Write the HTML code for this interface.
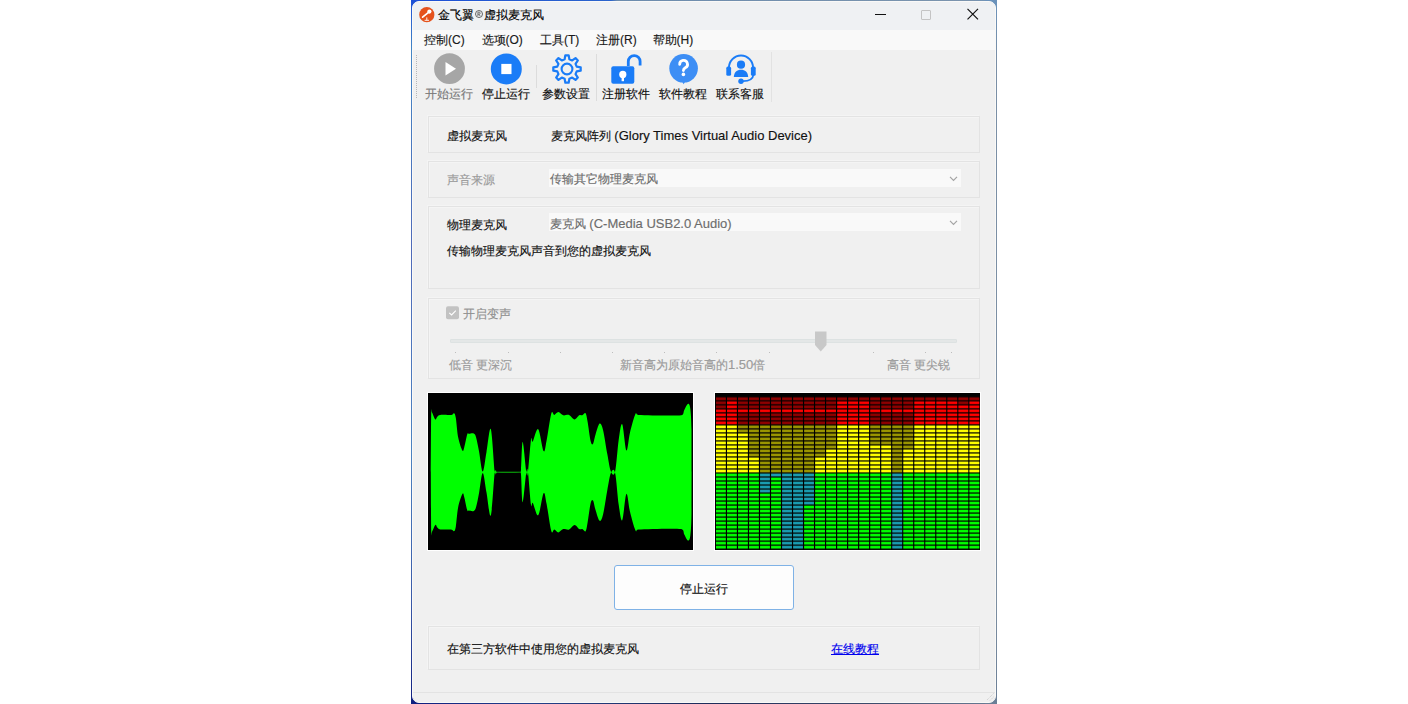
<!DOCTYPE html>
<html><head><meta charset="utf-8"><style>
html,body{margin:0;padding:0;background:#fff;width:1408px;height:704px;overflow:hidden;position:relative}
*{box-sizing:border-box}
.t{position:absolute;white-space:nowrap;font-size:12px;line-height:20px;font-family:'Liberation Sans',sans-serif;-webkit-text-stroke:0.15px currentColor}
.box{position:absolute;border:1px solid #e3e3e3;box-shadow:-1px -1px 0 #f4f4f4, inset 1px 1px 0 #f4f4f4}
</style></head><body>
<div style="position:absolute;left:411px;top:0;width:586px;height:704px;background:#f0f0f0"></div>
<div style="position:absolute;left:411px;top:0;width:586px;height:12px;background:linear-gradient(90deg,#1d50d6 0,#2a64cc 200px,#6c8cae 206px,#7b94ad 560px,#6a92bb 586px)"></div>
<div style="position:absolute;left:411px;top:692px;width:586px;height:12px;background:linear-gradient(90deg,#101f80 0,#23408a 120px,#1e2c5a 300px,#3c4c6c 460px,#6a7e96 586px)"></div>
<div style="position:absolute;left:411px;top:0;width:12px;height:704px;background:linear-gradient(180deg,#1d50d6 0,#4586c4 50px,#4f6ab8 250px,#4c82c0 450px,#3a5aa8 600px,#101f80 704px)"></div>
<div style="position:absolute;left:985px;top:0;width:12px;height:704px;background:linear-gradient(180deg,#6a92bb 0,#7a8fa6 60px,#7d8fa2 600px,#6a7e96 704px)"></div>
<div style="position:absolute;left:412px;top:1px;width:584px;height:702px;border-radius:7px;background:#f0f0f0;border:1px solid #faf9f7;overflow:hidden">
  <div style="position:absolute;left:0;top:0;width:100%;height:28px;background:#eff1f3"></div>
  <div style="position:absolute;left:0;top:28px;width:100%;height:20px;background:#f9f9f9"></div>
</div>
<svg width="16" height="16" style="position:absolute;left:419px;top:7px"><circle cx="7.8" cy="7.7" r="7.6" fill="#e5521c"/><path d="M3.6 10.2 L9.2 5.6" stroke="#fff" stroke-width="1.7" stroke-linecap="round"/><circle cx="10.4" cy="4.6" r="2.1" fill="#fff"/><path d="M7.8 10.4 V13.3 M5.6 13.3 H10" stroke="#fff" stroke-width="0.9"/></svg>
<div class="t" style="left:438px;top:4.800000000000001px;color:#000;">金飞翼</div>
<svg width="9" height="9" style="position:absolute;left:475px;top:10px"><circle cx="4.0" cy="4.0" r="3.5" fill="none" stroke="#555" stroke-width="0.9"/><path d="M2.9 6.0 V2.2 H4.2 A1.0 1.0 0 0 1 4.2 4.2 H2.9 M4.0 4.2 L5.1 6.0" fill="none" stroke="#555" stroke-width="0.8"/></svg>
<div class="t" style="left:483.6px;top:4.800000000000001px;color:#000;">虚拟麦克风</div>
<div style="position:absolute;left:875px;top:14px;width:11px;height:1px;background:#111"></div>
<div style="position:absolute;left:921px;top:10px;width:10px;height:10px;border:1px solid #c4c4c4;border-radius:1px"></div>
<svg width="14" height="14" style="position:absolute;left:966px;top:7.3px"><path d="M1.5 1.8 L12 12.3 M12 1.8 L1.5 12.3" stroke="#111" stroke-width="1.2"/></svg>
<div class="t" style="left:424px;top:29.5px;color:#1a1a1a;">控制(C)</div>
<div class="t" style="left:481.5px;top:29.5px;color:#1a1a1a;">选项(O)</div>
<div class="t" style="left:540px;top:29.5px;color:#1a1a1a;">工具(T)</div>
<div class="t" style="left:596px;top:29.5px;color:#1a1a1a;">注册(R)</div>
<div class="t" style="left:652.6px;top:29.5px;color:#1a1a1a;">帮助(H)</div>
<div style="position:absolute;left:416px;top:55px;width:1px;height:43px;border-left:1px dotted #b8b8b8"></div>
<svg width="32" height="32" style="position:absolute;left:434px;top:53px"><circle cx="15.5" cy="15.7" r="15.4" fill="#a6a6a6"/><path d="M11.5 9 L22 15.7 L11.5 22.4 Z" fill="#fff"/></svg>
<svg width="32" height="32" style="position:absolute;left:490px;top:53px"><circle cx="16.3" cy="15.9" r="15.5" fill="#1a7cf7"/><rect x="11.3" y="10.9" width="10.2" height="10.2" fill="#fff"/></svg>
<div style="position:absolute;left:536px;top:65px;width:1px;height:23px;background:#dcdcdc"></div>
<svg width="32" height="32" style="position:absolute;left:550.8px;top:52.9px"><path d="M13.62 6.29 L14.35 2.30 L17.65 2.30 L18.38 6.29 L21.19 7.45 L24.52 5.14 L26.86 7.48 L24.55 10.81 L25.71 13.62 L29.70 14.35 L29.70 17.65 L25.71 18.38 L24.55 21.19 L26.86 24.52 L24.52 26.86 L21.19 24.55 L18.38 25.71 L17.65 29.70 L14.35 29.70 L13.62 25.71 L10.81 24.55 L7.48 26.86 L5.14 24.52 L7.45 21.19 L6.29 18.38 L2.30 17.65 L2.30 14.35 L6.29 13.62 L7.45 10.81 L5.14 7.48 L7.48 5.14 L10.81 7.45 Z" fill="none" stroke="#1a7cf7" stroke-width="2.2" stroke-linejoin="round"/><circle cx="16" cy="16" r="5.4" fill="none" stroke="#1a7cf7" stroke-width="2.1"/></svg>
<div style="position:absolute;left:596px;top:54px;width:1px;height:47px;background:#dcdcdc"></div>
<svg width="34" height="34" style="position:absolute;left:608px;top:51px"><path d="M20.3 15 V10.5 A5.9 5.9 0 0 1 32.1 10.5 V14.5" fill="none" stroke="#1a7cf7" stroke-width="2.8"/><rect x="3.3" y="15.3" width="23" height="17.5" rx="2" fill="#1a7cf7"/><circle cx="14.8" cy="23.4" r="3.6" fill="#fff"/><rect x="13.6" y="24" width="2.4" height="6.2" fill="#fff"/></svg>
<svg width="32" height="34" style="position:absolute;left:668px;top:52px"><circle cx="15.6" cy="16.3" r="14.3" fill="#3d8ef5"/><path d="M14.3 30 L15.6 32.3 L17 30 Z" fill="#3d8ef5"/><path d="M11.7 12.4 A3.9 3.9 0 1 1 17.3 15.8 C15.9 16.7 15.4 17.3 15.4 18.6" fill="none" stroke="#fff" stroke-width="2.8" stroke-linecap="round"/><circle cx="15.4" cy="22.4" r="1.8" fill="#fff"/></svg>
<svg width="34" height="34" style="position:absolute;left:723.5px;top:51px"><path d="M4.9 17 A12.1 12.6 0 0 1 29.1 17" fill="none" stroke="#1a7cf7" stroke-width="2"/><rect x="2.3" y="15.6" width="4.8" height="9.2" rx="1.6" fill="#1a7cf7"/><rect x="26.9" y="15.6" width="4.8" height="9.2" rx="1.6" fill="#1a7cf7"/><circle cx="17" cy="13.7" r="4.1" fill="#1a7cf7"/><path d="M9.8 26 C10.1 21.2 13 18.8 17 18.8 C21 18.8 23.9 21.2 24.2 26 Z" fill="#1a7cf7"/><path d="M29.3 24 C29 28.4 25.5 30 19 30.2" fill="none" stroke="#1a7cf7" stroke-width="1.8"/><circle cx="17" cy="30.2" r="2.7" fill="#1a7cf7"/></svg>
<div style="position:absolute;left:771px;top:52px;width:1px;height:50px;background:#e2e2e2"></div>
<div class="t" style="left:425px;top:84px;color:#7a7a7a;">开始运行</div>
<div class="t" style="left:482.2px;top:84px;color:#111;">停止运行</div>
<div class="t" style="left:542.3px;top:84px;color:#111;">参数设置</div>
<div class="t" style="left:602px;top:84px;color:#111;">注册软件</div>
<div class="t" style="left:659px;top:84px;color:#111;">软件教程</div>
<div class="t" style="left:716.2px;top:84px;color:#111;">联系客服</div>
<div class="box" style="left:428px;top:116px;width:552px;height:37px"></div>
<div class="box" style="left:428px;top:161px;width:552px;height:37px"></div>
<div class="box" style="left:428px;top:206px;width:552px;height:83px"></div>
<div class="box" style="left:428px;top:298px;width:552px;height:81px"></div>
<div class="box" style="left:428px;top:626px;width:552px;height:44px"></div>
<div class="t" style="left:447px;top:126px;color:#111;">虚拟麦克风</div>
<div class="t" style="left:551px;top:126px;color:#111;">麦克风阵列 <span style="font-size:13px;letter-spacing:0">(Glory Times Virtual Audio Device)</span></div>
<div class="t" style="left:447px;top:170.4px;color:#9a9a9a;">声音来源</div>
<div style="position:absolute;left:549px;top:169px;width:412px;height:18px;background:#f9f9f9"></div>
<svg width="10" height="7" style="position:absolute;left:949px;top:176px"><path d="M1 0.8 L4.5 4.3 L8 0.8" fill="none" stroke="#a4a4a4" stroke-width="1.2"/></svg>
<div style="position:absolute;left:549px;top:213px;width:412px;height:18px;background:#f9f9f9"></div>
<svg width="10" height="7" style="position:absolute;left:949px;top:220px"><path d="M1 0.8 L4.5 4.3 L8 0.8" fill="none" stroke="#a4a4a4" stroke-width="1.2"/></svg>
<div class="t" style="left:550px;top:169.4px;color:#6d6d6d;">传输其它物理麦克风</div>
<div class="t" style="left:447px;top:214.8px;color:#111;">物理麦克风</div>
<div class="t" style="left:550px;top:213.5px;color:#6d6d6d;">麦克风 <span style="font-size:13px;letter-spacing:0">(C-Media USB2.0 Audio)</span></div>
<div class="t" style="left:447px;top:241.2px;color:#111;">传输物理麦克风声音到您的虚拟麦克风</div>
<svg width="14" height="14" style="position:absolute;left:446px;top:306px"><rect x="0" y="0.3" width="13" height="13" rx="2" fill="#c2c2c2"/><path d="M3.3 6.8 L5.6 9 L9.8 4.6" fill="none" stroke="#fff" stroke-width="1.1"/></svg>
<div class="t" style="left:463px;top:304px;color:#8f8f8f;">开启变声</div>
<div style="position:absolute;left:450px;top:338.5px;width:507px;height:4.5px;background:#e4e7e7;border:1px solid #dde2e2;border-radius:1px"></div>
<div style="position:absolute;left:455.3px;top:351.5px;width:1px;height:1px;background:#bdbdbd"></div>
<div style="position:absolute;left:507.5px;top:351.5px;width:1px;height:1px;background:#bdbdbd"></div>
<div style="position:absolute;left:559.7px;top:351.5px;width:1px;height:1px;background:#bdbdbd"></div>
<div style="position:absolute;left:611.9px;top:351.5px;width:1px;height:1px;background:#bdbdbd"></div>
<div style="position:absolute;left:664.1px;top:351.5px;width:1px;height:1px;background:#bdbdbd"></div>
<div style="position:absolute;left:716.3px;top:351.5px;width:1px;height:1px;background:#bdbdbd"></div>
<div style="position:absolute;left:768.5px;top:351.5px;width:1px;height:1px;background:#bdbdbd"></div>
<div style="position:absolute;left:872.9px;top:351.5px;width:1px;height:1px;background:#bdbdbd"></div>
<div style="position:absolute;left:925.1px;top:351.5px;width:1px;height:1px;background:#bdbdbd"></div>
<div style="position:absolute;left:950.9px;top:351.5px;width:1px;height:1px;background:#bdbdbd"></div>
<svg width="14" height="22" style="position:absolute;left:814px;top:331px"><path d="M1 0.5 H12.5 V14 L6.75 20.5 L1 14 Z" fill="#c8c8c8"/></svg>
<div class="t" style="left:449px;top:355px;color:#9a9a9a;">低音 更深沉</div>
<div class="t" style="left:620px;top:355px;color:#9a9a9a;">新音高为原始音高的<span style="font-size:13px;letter-spacing:0">1.50</span>倍</div>
<div class="t" style="left:887px;top:355px;color:#9a9a9a;">高音 更尖锐</div>
<div style="position:absolute;left:427px;top:392px;width:267px;height:159px;background:#fff"></div>
<div style="position:absolute;left:714px;top:392px;width:267px;height:159px;background:#fff"></div>
<svg width="265" height="157" style="position:absolute;left:428px;top:393px;background:#000"><path d="M2.80 79.20 C2.87 69.50 3.00 30.95 3.20 21.00 C3.40 11.05 3.32 18.60 4.00 19.50 C4.68 20.40 6.42 25.68 7.30 26.40 C8.18 27.12 8.47 24.55 9.30 23.80 C10.13 23.05 10.00 22.22 12.30 21.90 C14.60 21.58 20.82 22.18 23.10 21.90 C25.38 21.62 25.22 19.73 26.00 20.20 C26.78 20.67 27.10 20.67 27.80 24.70 C28.50 28.73 29.10 38.93 30.20 44.40 C31.30 49.87 33.40 55.82 34.40 57.50 C35.40 59.18 35.40 57.18 36.20 54.50 C37.00 51.82 38.40 43.68 39.20 41.40 C40.00 39.12 39.92 40.95 41.00 40.80 C42.08 40.65 44.52 39.90 45.70 40.50 C46.88 41.10 47.20 41.37 48.10 44.40 C49.00 47.43 50.00 53.02 51.10 58.70 C52.20 64.38 53.47 78.45 54.70 78.50 C55.93 78.55 57.15 66.08 58.50 59.00 C59.85 51.92 61.45 32.87 62.80 36.00 C64.15 39.13 65.77 71.00 66.60 77.80 C67.43 84.60 67.37 76.57 67.80 76.80 C68.23 77.03 67.80 78.80 69.20 79.20 C73.20 79.60 87.83 79.60 91.80 79.20 C93.00 78.80 92.52 81.82 93.00 76.80 C93.48 71.78 93.82 48.77 94.70 49.10 C95.58 49.43 97.42 73.85 98.30 78.80 C99.18 83.75 99.22 84.15 100.00 78.80 C100.78 73.45 102.20 51.75 103.00 46.70 C103.80 41.65 103.60 50.25 104.80 48.50 C106.00 46.75 108.40 34.60 110.20 36.20 C112.00 37.80 114.22 56.13 115.60 58.10 C116.98 60.07 117.22 54.27 118.50 48.00 C119.78 41.73 122.00 24.85 123.30 20.50 C124.60 16.15 125.12 22.15 126.30 21.90 C127.48 21.65 128.92 18.93 130.40 19.00 C131.88 19.07 133.42 21.82 135.20 22.30 C136.98 22.78 139.22 21.22 141.10 21.90 C142.98 22.58 144.80 26.33 146.50 26.40 C148.20 26.47 150.00 22.98 151.30 22.30 C152.60 21.62 153.25 22.65 154.30 22.30 C155.35 21.95 156.72 19.12 157.60 20.20 C158.48 21.28 158.77 24.18 159.60 28.80 C160.43 33.42 161.70 44.22 162.60 47.90 C163.50 51.58 164.20 51.88 165.00 50.90 C165.80 49.92 166.30 45.38 167.40 42.00 C168.50 38.62 170.32 31.40 171.60 30.60 C172.88 29.80 173.82 32.12 175.10 37.20 C176.38 42.28 178.00 54.22 179.30 61.10 C180.60 67.98 181.60 75.60 182.90 78.50 C184.20 81.40 185.80 83.80 187.10 78.50 C188.40 73.20 189.52 54.58 190.70 46.70 C191.88 38.82 192.92 29.40 194.20 31.20 C195.48 33.00 197.10 56.10 198.40 57.50 C199.70 58.90 200.50 45.67 202.00 39.60 C203.50 33.53 206.00 24.05 207.40 21.10 C208.80 18.15 207.40 21.70 210.40 21.90 C218.05 22.10 245.65 23.13 253.30 22.30 C256.30 21.47 255.20 18.80 256.30 16.90 C257.40 15.00 258.90 11.10 259.90 10.90 C260.90 10.70 261.70 11.35 262.30 15.70 C262.90 20.05 263.28 26.42 263.50 37.00 C263.60 47.58 263.58 72.17 263.60 79.20 C263.58 86.23 263.60 110.82 263.50 121.40 C263.28 131.98 262.90 138.35 262.30 142.70 C261.70 147.05 260.90 147.70 259.90 147.50 C258.90 147.30 257.40 143.40 256.30 141.50 C255.20 139.60 256.30 136.93 253.30 136.10 C245.65 135.27 218.05 136.30 210.40 136.50 C207.40 136.70 208.80 140.25 207.40 137.30 C206.00 134.35 203.50 124.87 202.00 118.80 C200.50 112.73 199.70 99.50 198.40 100.90 C197.10 102.30 195.48 125.40 194.20 127.20 C192.92 129.00 191.88 119.58 190.70 111.70 C189.52 103.82 188.40 85.20 187.10 79.90 C185.80 74.60 184.20 77.00 182.90 79.90 C181.60 82.80 180.60 90.42 179.30 97.30 C178.00 104.18 176.38 116.12 175.10 121.20 C173.82 126.28 172.88 128.60 171.60 127.80 C170.32 127.00 168.50 119.78 167.40 116.40 C166.30 113.02 165.80 108.48 165.00 107.50 C164.20 106.52 163.50 106.82 162.60 110.50 C161.70 114.18 160.43 124.98 159.60 129.60 C158.77 134.22 158.48 137.12 157.60 138.20 C156.72 139.28 155.35 136.45 154.30 136.10 C153.25 135.75 152.60 136.78 151.30 136.10 C150.00 135.42 148.20 131.93 146.50 132.00 C144.80 132.07 142.98 135.82 141.10 136.50 C139.22 137.18 136.98 135.62 135.20 136.10 C133.42 136.58 131.88 139.33 130.40 139.40 C128.92 139.47 127.48 136.75 126.30 136.50 C125.12 136.25 124.60 142.25 123.30 137.90 C122.00 133.55 119.78 116.67 118.50 110.40 C117.22 104.13 116.98 98.33 115.60 100.30 C114.22 102.27 112.00 120.60 110.20 122.20 C108.40 123.80 106.00 111.65 104.80 109.90 C103.60 108.15 103.80 116.75 103.00 111.70 C102.20 106.65 100.78 84.95 100.00 79.60 C99.22 74.25 99.18 74.65 98.30 79.60 C97.42 84.55 95.58 108.97 94.70 109.30 C93.82 109.63 93.48 86.62 93.00 81.60 C92.52 76.58 93.00 79.60 91.80 79.20 C87.83 78.80 73.20 78.80 69.20 79.20 C67.80 79.60 68.23 81.37 67.80 81.60 C67.37 81.83 67.43 73.80 66.60 80.60 C65.77 87.40 64.15 119.27 62.80 122.40 C61.45 125.53 59.85 106.48 58.50 99.40 C57.15 92.32 55.93 79.85 54.70 79.90 C53.47 79.95 52.20 94.02 51.10 99.70 C50.00 105.38 49.00 110.97 48.10 114.00 C47.20 117.03 46.88 117.30 45.70 117.90 C44.52 118.50 42.08 117.75 41.00 117.60 C39.92 117.45 40.00 119.28 39.20 117.00 C38.40 114.72 37.00 106.58 36.20 103.90 C35.40 101.22 35.40 99.22 34.40 100.90 C33.40 102.58 31.30 108.53 30.20 114.00 C29.10 119.47 28.50 129.67 27.80 133.70 C27.10 137.73 26.78 137.73 26.00 138.20 C25.22 138.67 25.38 136.78 23.10 136.50 C20.82 136.22 14.60 136.82 12.30 136.50 C10.00 136.18 10.13 135.35 9.30 134.60 C8.47 133.85 8.18 131.28 7.30 132.00 C6.42 132.72 4.68 138.00 4.00 138.90 C3.32 139.80 3.40 147.35 3.20 137.40 C3.00 127.45 2.87 88.90 2.80 79.20 Z" fill="#00ff00"/><line x1="69" y1="79.2" x2="93" y2="79.2" stroke="#0b8f0b" stroke-width="1.1"/></svg>
<svg width="265" height="157" style="position:absolute;left:715px;top:393px;background:#000"><rect x="1.00" y="3.80" width="9.8" height="4.0" fill="#380000"/><rect x="1.00" y="4.70" width="9.8" height="2.2" fill="#8e0000"/><rect x="1.00" y="7.81" width="9.8" height="4.0" fill="#380000"/><rect x="1.00" y="8.71" width="9.8" height="2.2" fill="#8e0000"/><rect x="1.00" y="11.82" width="9.8" height="4.0" fill="#380000"/><rect x="1.00" y="12.72" width="9.8" height="2.2" fill="#8e0000"/><rect x="1.00" y="15.83" width="9.8" height="4.0" fill="#5a0000"/><rect x="1.00" y="16.73" width="9.8" height="2.2" fill="#ff0000"/><rect x="1.00" y="19.84" width="9.8" height="4.0" fill="#5a0000"/><rect x="1.00" y="20.74" width="9.8" height="2.2" fill="#ff0000"/><rect x="1.00" y="23.85" width="9.8" height="4.0" fill="#5a0000"/><rect x="1.00" y="24.75" width="9.8" height="2.2" fill="#ff0000"/><rect x="1.00" y="27.86" width="9.8" height="4.0" fill="#5a0000"/><rect x="1.00" y="28.76" width="9.8" height="2.2" fill="#ff0000"/><rect x="1.00" y="31.87" width="9.8" height="4.0" fill="#5a5a00"/><rect x="1.00" y="32.77" width="9.8" height="2.2" fill="#ffff00"/><rect x="1.00" y="35.88" width="9.8" height="4.0" fill="#5a5a00"/><rect x="1.00" y="36.78" width="9.8" height="2.2" fill="#ffff00"/><rect x="1.00" y="39.89" width="9.8" height="4.0" fill="#5a5a00"/><rect x="1.00" y="40.79" width="9.8" height="2.2" fill="#ffff00"/><rect x="1.00" y="43.90" width="9.8" height="4.0" fill="#5a5a00"/><rect x="1.00" y="44.80" width="9.8" height="2.2" fill="#ffff00"/><rect x="1.00" y="47.91" width="9.8" height="4.0" fill="#5a5a00"/><rect x="1.00" y="48.81" width="9.8" height="2.2" fill="#ffff00"/><rect x="1.00" y="51.92" width="9.8" height="4.0" fill="#5a5a00"/><rect x="1.00" y="52.82" width="9.8" height="2.2" fill="#ffff00"/><rect x="1.00" y="55.93" width="9.8" height="4.0" fill="#5a5a00"/><rect x="1.00" y="56.83" width="9.8" height="2.2" fill="#ffff00"/><rect x="1.00" y="59.94" width="9.8" height="4.0" fill="#5a5a00"/><rect x="1.00" y="60.84" width="9.8" height="2.2" fill="#ffff00"/><rect x="1.00" y="63.95" width="9.8" height="4.0" fill="#5a5a00"/><rect x="1.00" y="64.85" width="9.8" height="2.2" fill="#ffff00"/><rect x="1.00" y="67.96" width="9.8" height="4.0" fill="#5a5a00"/><rect x="1.00" y="68.86" width="9.8" height="2.2" fill="#ffff00"/><rect x="1.00" y="71.97" width="9.8" height="4.0" fill="#5a5a00"/><rect x="1.00" y="72.87" width="9.8" height="2.2" fill="#ffff00"/><rect x="1.00" y="75.98" width="9.8" height="4.0" fill="#5a5a00"/><rect x="1.00" y="76.88" width="9.8" height="2.2" fill="#ffff00"/><rect x="1.00" y="79.99" width="9.8" height="4.0" fill="#005a00"/><rect x="1.00" y="80.89" width="9.8" height="2.2" fill="#00ff00"/><rect x="1.00" y="84.00" width="9.8" height="4.0" fill="#005a00"/><rect x="1.00" y="84.90" width="9.8" height="2.2" fill="#00ff00"/><rect x="1.00" y="88.01" width="9.8" height="4.0" fill="#005a00"/><rect x="1.00" y="88.91" width="9.8" height="2.2" fill="#00ff00"/><rect x="1.00" y="92.02" width="9.8" height="4.0" fill="#005a00"/><rect x="1.00" y="92.92" width="9.8" height="2.2" fill="#00ff00"/><rect x="1.00" y="96.03" width="9.8" height="4.0" fill="#005a00"/><rect x="1.00" y="96.93" width="9.8" height="2.2" fill="#00ff00"/><rect x="1.00" y="100.04" width="9.8" height="4.0" fill="#005a00"/><rect x="1.00" y="100.94" width="9.8" height="2.2" fill="#00ff00"/><rect x="1.00" y="104.05" width="9.8" height="4.0" fill="#005a00"/><rect x="1.00" y="104.95" width="9.8" height="2.2" fill="#00ff00"/><rect x="1.00" y="108.06" width="9.8" height="4.0" fill="#005a00"/><rect x="1.00" y="108.96" width="9.8" height="2.2" fill="#00ff00"/><rect x="1.00" y="112.07" width="9.8" height="4.0" fill="#005a00"/><rect x="1.00" y="112.97" width="9.8" height="2.2" fill="#00ff00"/><rect x="1.00" y="116.08" width="9.8" height="4.0" fill="#005a00"/><rect x="1.00" y="116.98" width="9.8" height="2.2" fill="#00ff00"/><rect x="1.00" y="120.09" width="9.8" height="4.0" fill="#005a00"/><rect x="1.00" y="120.99" width="9.8" height="2.2" fill="#00ff00"/><rect x="1.00" y="124.10" width="9.8" height="4.0" fill="#005a00"/><rect x="1.00" y="125.00" width="9.8" height="2.2" fill="#00ff00"/><rect x="1.00" y="128.11" width="9.8" height="4.0" fill="#005a00"/><rect x="1.00" y="129.01" width="9.8" height="2.2" fill="#00ff00"/><rect x="1.00" y="132.12" width="9.8" height="4.0" fill="#005a00"/><rect x="1.00" y="133.02" width="9.8" height="2.2" fill="#00ff00"/><rect x="1.00" y="136.13" width="9.8" height="4.0" fill="#005a00"/><rect x="1.00" y="137.03" width="9.8" height="2.2" fill="#00ff00"/><rect x="1.00" y="140.14" width="9.8" height="4.0" fill="#005a00"/><rect x="1.00" y="141.04" width="9.8" height="2.2" fill="#00ff00"/><rect x="1.00" y="144.15" width="9.8" height="4.0" fill="#005a00"/><rect x="1.00" y="145.05" width="9.8" height="2.2" fill="#00ff00"/><rect x="1.00" y="148.16" width="9.8" height="4.0" fill="#005a00"/><rect x="1.00" y="149.06" width="9.8" height="2.2" fill="#00ff00"/><rect x="1.00" y="152.17" width="9.8" height="4.0" fill="#005a00"/><rect x="1.00" y="153.07" width="9.8" height="2.2" fill="#00ff00"/><rect x="12.02" y="3.80" width="9.8" height="4.0" fill="#380000"/><rect x="12.02" y="4.70" width="9.8" height="2.2" fill="#8e0000"/><rect x="12.02" y="7.81" width="9.8" height="4.0" fill="#5a0000"/><rect x="12.02" y="8.71" width="9.8" height="2.2" fill="#ff0000"/><rect x="12.02" y="11.82" width="9.8" height="4.0" fill="#5a0000"/><rect x="12.02" y="12.72" width="9.8" height="2.2" fill="#ff0000"/><rect x="12.02" y="15.83" width="9.8" height="4.0" fill="#5a0000"/><rect x="12.02" y="16.73" width="9.8" height="2.2" fill="#ff0000"/><rect x="12.02" y="19.84" width="9.8" height="4.0" fill="#5a0000"/><rect x="12.02" y="20.74" width="9.8" height="2.2" fill="#ff0000"/><rect x="12.02" y="23.85" width="9.8" height="4.0" fill="#5a0000"/><rect x="12.02" y="24.75" width="9.8" height="2.2" fill="#ff0000"/><rect x="12.02" y="27.86" width="9.8" height="4.0" fill="#5a0000"/><rect x="12.02" y="28.76" width="9.8" height="2.2" fill="#ff0000"/><rect x="12.02" y="31.87" width="9.8" height="4.0" fill="#5a5a00"/><rect x="12.02" y="32.77" width="9.8" height="2.2" fill="#ffff00"/><rect x="12.02" y="35.88" width="9.8" height="4.0" fill="#5a5a00"/><rect x="12.02" y="36.78" width="9.8" height="2.2" fill="#ffff00"/><rect x="12.02" y="39.89" width="9.8" height="4.0" fill="#5a5a00"/><rect x="12.02" y="40.79" width="9.8" height="2.2" fill="#ffff00"/><rect x="12.02" y="43.90" width="9.8" height="4.0" fill="#5a5a00"/><rect x="12.02" y="44.80" width="9.8" height="2.2" fill="#ffff00"/><rect x="12.02" y="47.91" width="9.8" height="4.0" fill="#5a5a00"/><rect x="12.02" y="48.81" width="9.8" height="2.2" fill="#ffff00"/><rect x="12.02" y="51.92" width="9.8" height="4.0" fill="#5a5a00"/><rect x="12.02" y="52.82" width="9.8" height="2.2" fill="#ffff00"/><rect x="12.02" y="55.93" width="9.8" height="4.0" fill="#5a5a00"/><rect x="12.02" y="56.83" width="9.8" height="2.2" fill="#ffff00"/><rect x="12.02" y="59.94" width="9.8" height="4.0" fill="#5a5a00"/><rect x="12.02" y="60.84" width="9.8" height="2.2" fill="#ffff00"/><rect x="12.02" y="63.95" width="9.8" height="4.0" fill="#5a5a00"/><rect x="12.02" y="64.85" width="9.8" height="2.2" fill="#ffff00"/><rect x="12.02" y="67.96" width="9.8" height="4.0" fill="#5a5a00"/><rect x="12.02" y="68.86" width="9.8" height="2.2" fill="#ffff00"/><rect x="12.02" y="71.97" width="9.8" height="4.0" fill="#5a5a00"/><rect x="12.02" y="72.87" width="9.8" height="2.2" fill="#ffff00"/><rect x="12.02" y="75.98" width="9.8" height="4.0" fill="#5a5a00"/><rect x="12.02" y="76.88" width="9.8" height="2.2" fill="#ffff00"/><rect x="12.02" y="79.99" width="9.8" height="4.0" fill="#005a00"/><rect x="12.02" y="80.89" width="9.8" height="2.2" fill="#00ff00"/><rect x="12.02" y="84.00" width="9.8" height="4.0" fill="#005a00"/><rect x="12.02" y="84.90" width="9.8" height="2.2" fill="#00ff00"/><rect x="12.02" y="88.01" width="9.8" height="4.0" fill="#005a00"/><rect x="12.02" y="88.91" width="9.8" height="2.2" fill="#00ff00"/><rect x="12.02" y="92.02" width="9.8" height="4.0" fill="#005a00"/><rect x="12.02" y="92.92" width="9.8" height="2.2" fill="#00ff00"/><rect x="12.02" y="96.03" width="9.8" height="4.0" fill="#005a00"/><rect x="12.02" y="96.93" width="9.8" height="2.2" fill="#00ff00"/><rect x="12.02" y="100.04" width="9.8" height="4.0" fill="#005a00"/><rect x="12.02" y="100.94" width="9.8" height="2.2" fill="#00ff00"/><rect x="12.02" y="104.05" width="9.8" height="4.0" fill="#005a00"/><rect x="12.02" y="104.95" width="9.8" height="2.2" fill="#00ff00"/><rect x="12.02" y="108.06" width="9.8" height="4.0" fill="#005a00"/><rect x="12.02" y="108.96" width="9.8" height="2.2" fill="#00ff00"/><rect x="12.02" y="112.07" width="9.8" height="4.0" fill="#005a00"/><rect x="12.02" y="112.97" width="9.8" height="2.2" fill="#00ff00"/><rect x="12.02" y="116.08" width="9.8" height="4.0" fill="#005a00"/><rect x="12.02" y="116.98" width="9.8" height="2.2" fill="#00ff00"/><rect x="12.02" y="120.09" width="9.8" height="4.0" fill="#005a00"/><rect x="12.02" y="120.99" width="9.8" height="2.2" fill="#00ff00"/><rect x="12.02" y="124.10" width="9.8" height="4.0" fill="#005a00"/><rect x="12.02" y="125.00" width="9.8" height="2.2" fill="#00ff00"/><rect x="12.02" y="128.11" width="9.8" height="4.0" fill="#005a00"/><rect x="12.02" y="129.01" width="9.8" height="2.2" fill="#00ff00"/><rect x="12.02" y="132.12" width="9.8" height="4.0" fill="#005a00"/><rect x="12.02" y="133.02" width="9.8" height="2.2" fill="#00ff00"/><rect x="12.02" y="136.13" width="9.8" height="4.0" fill="#005a00"/><rect x="12.02" y="137.03" width="9.8" height="2.2" fill="#00ff00"/><rect x="12.02" y="140.14" width="9.8" height="4.0" fill="#005a00"/><rect x="12.02" y="141.04" width="9.8" height="2.2" fill="#00ff00"/><rect x="12.02" y="144.15" width="9.8" height="4.0" fill="#005a00"/><rect x="12.02" y="145.05" width="9.8" height="2.2" fill="#00ff00"/><rect x="12.02" y="148.16" width="9.8" height="4.0" fill="#005a00"/><rect x="12.02" y="149.06" width="9.8" height="2.2" fill="#00ff00"/><rect x="12.02" y="152.17" width="9.8" height="4.0" fill="#005a00"/><rect x="12.02" y="153.07" width="9.8" height="2.2" fill="#00ff00"/><rect x="23.04" y="3.80" width="9.8" height="4.0" fill="#380000"/><rect x="23.04" y="4.70" width="9.8" height="2.2" fill="#8e0000"/><rect x="23.04" y="7.81" width="9.8" height="4.0" fill="#380000"/><rect x="23.04" y="8.71" width="9.8" height="2.2" fill="#8e0000"/><rect x="23.04" y="11.82" width="9.8" height="4.0" fill="#380000"/><rect x="23.04" y="12.72" width="9.8" height="2.2" fill="#8e0000"/><rect x="23.04" y="15.83" width="9.8" height="4.0" fill="#5a0000"/><rect x="23.04" y="16.73" width="9.8" height="2.2" fill="#ff0000"/><rect x="23.04" y="19.84" width="9.8" height="4.0" fill="#380000"/><rect x="23.04" y="20.74" width="9.8" height="2.2" fill="#8e0000"/><rect x="23.04" y="23.85" width="9.8" height="4.0" fill="#380000"/><rect x="23.04" y="24.75" width="9.8" height="2.2" fill="#8e0000"/><rect x="23.04" y="27.86" width="9.8" height="4.0" fill="#380000"/><rect x="23.04" y="28.76" width="9.8" height="2.2" fill="#8e0000"/><rect x="23.04" y="31.87" width="9.8" height="4.0" fill="#363400"/><rect x="23.04" y="32.77" width="9.8" height="2.2" fill="#9a9500"/><rect x="23.04" y="35.88" width="9.8" height="4.0" fill="#363400"/><rect x="23.04" y="36.78" width="9.8" height="2.2" fill="#9a9500"/><rect x="23.04" y="39.89" width="9.8" height="4.0" fill="#5a5a00"/><rect x="23.04" y="40.79" width="9.8" height="2.2" fill="#ffff00"/><rect x="23.04" y="43.90" width="9.8" height="4.0" fill="#5a5a00"/><rect x="23.04" y="44.80" width="9.8" height="2.2" fill="#ffff00"/><rect x="23.04" y="47.91" width="9.8" height="4.0" fill="#5a5a00"/><rect x="23.04" y="48.81" width="9.8" height="2.2" fill="#ffff00"/><rect x="23.04" y="51.92" width="9.8" height="4.0" fill="#5a5a00"/><rect x="23.04" y="52.82" width="9.8" height="2.2" fill="#ffff00"/><rect x="23.04" y="55.93" width="9.8" height="4.0" fill="#5a5a00"/><rect x="23.04" y="56.83" width="9.8" height="2.2" fill="#ffff00"/><rect x="23.04" y="59.94" width="9.8" height="4.0" fill="#5a5a00"/><rect x="23.04" y="60.84" width="9.8" height="2.2" fill="#ffff00"/><rect x="23.04" y="63.95" width="9.8" height="4.0" fill="#5a5a00"/><rect x="23.04" y="64.85" width="9.8" height="2.2" fill="#ffff00"/><rect x="23.04" y="67.96" width="9.8" height="4.0" fill="#5a5a00"/><rect x="23.04" y="68.86" width="9.8" height="2.2" fill="#ffff00"/><rect x="23.04" y="71.97" width="9.8" height="4.0" fill="#5a5a00"/><rect x="23.04" y="72.87" width="9.8" height="2.2" fill="#ffff00"/><rect x="23.04" y="75.98" width="9.8" height="4.0" fill="#5a5a00"/><rect x="23.04" y="76.88" width="9.8" height="2.2" fill="#ffff00"/><rect x="23.04" y="79.99" width="9.8" height="4.0" fill="#005a00"/><rect x="23.04" y="80.89" width="9.8" height="2.2" fill="#00ff00"/><rect x="23.04" y="84.00" width="9.8" height="4.0" fill="#005a00"/><rect x="23.04" y="84.90" width="9.8" height="2.2" fill="#00ff00"/><rect x="23.04" y="88.01" width="9.8" height="4.0" fill="#005a00"/><rect x="23.04" y="88.91" width="9.8" height="2.2" fill="#00ff00"/><rect x="23.04" y="92.02" width="9.8" height="4.0" fill="#005a00"/><rect x="23.04" y="92.92" width="9.8" height="2.2" fill="#00ff00"/><rect x="23.04" y="96.03" width="9.8" height="4.0" fill="#005a00"/><rect x="23.04" y="96.93" width="9.8" height="2.2" fill="#00ff00"/><rect x="23.04" y="100.04" width="9.8" height="4.0" fill="#005a00"/><rect x="23.04" y="100.94" width="9.8" height="2.2" fill="#00ff00"/><rect x="23.04" y="104.05" width="9.8" height="4.0" fill="#005a00"/><rect x="23.04" y="104.95" width="9.8" height="2.2" fill="#00ff00"/><rect x="23.04" y="108.06" width="9.8" height="4.0" fill="#005a00"/><rect x="23.04" y="108.96" width="9.8" height="2.2" fill="#00ff00"/><rect x="23.04" y="112.07" width="9.8" height="4.0" fill="#005a00"/><rect x="23.04" y="112.97" width="9.8" height="2.2" fill="#00ff00"/><rect x="23.04" y="116.08" width="9.8" height="4.0" fill="#005a00"/><rect x="23.04" y="116.98" width="9.8" height="2.2" fill="#00ff00"/><rect x="23.04" y="120.09" width="9.8" height="4.0" fill="#005a00"/><rect x="23.04" y="120.99" width="9.8" height="2.2" fill="#00ff00"/><rect x="23.04" y="124.10" width="9.8" height="4.0" fill="#005a00"/><rect x="23.04" y="125.00" width="9.8" height="2.2" fill="#00ff00"/><rect x="23.04" y="128.11" width="9.8" height="4.0" fill="#005a00"/><rect x="23.04" y="129.01" width="9.8" height="2.2" fill="#00ff00"/><rect x="23.04" y="132.12" width="9.8" height="4.0" fill="#005a00"/><rect x="23.04" y="133.02" width="9.8" height="2.2" fill="#00ff00"/><rect x="23.04" y="136.13" width="9.8" height="4.0" fill="#005a00"/><rect x="23.04" y="137.03" width="9.8" height="2.2" fill="#00ff00"/><rect x="23.04" y="140.14" width="9.8" height="4.0" fill="#005a00"/><rect x="23.04" y="141.04" width="9.8" height="2.2" fill="#00ff00"/><rect x="23.04" y="144.15" width="9.8" height="4.0" fill="#005a00"/><rect x="23.04" y="145.05" width="9.8" height="2.2" fill="#00ff00"/><rect x="23.04" y="148.16" width="9.8" height="4.0" fill="#005a00"/><rect x="23.04" y="149.06" width="9.8" height="2.2" fill="#00ff00"/><rect x="23.04" y="152.17" width="9.8" height="4.0" fill="#005a00"/><rect x="23.04" y="153.07" width="9.8" height="2.2" fill="#00ff00"/><rect x="34.06" y="3.80" width="9.8" height="4.0" fill="#380000"/><rect x="34.06" y="4.70" width="9.8" height="2.2" fill="#8e0000"/><rect x="34.06" y="7.81" width="9.8" height="4.0" fill="#380000"/><rect x="34.06" y="8.71" width="9.8" height="2.2" fill="#8e0000"/><rect x="34.06" y="11.82" width="9.8" height="4.0" fill="#380000"/><rect x="34.06" y="12.72" width="9.8" height="2.2" fill="#8e0000"/><rect x="34.06" y="15.83" width="9.8" height="4.0" fill="#5a0000"/><rect x="34.06" y="16.73" width="9.8" height="2.2" fill="#ff0000"/><rect x="34.06" y="19.84" width="9.8" height="4.0" fill="#380000"/><rect x="34.06" y="20.74" width="9.8" height="2.2" fill="#8e0000"/><rect x="34.06" y="23.85" width="9.8" height="4.0" fill="#380000"/><rect x="34.06" y="24.75" width="9.8" height="2.2" fill="#8e0000"/><rect x="34.06" y="27.86" width="9.8" height="4.0" fill="#380000"/><rect x="34.06" y="28.76" width="9.8" height="2.2" fill="#8e0000"/><rect x="34.06" y="31.87" width="9.8" height="4.0" fill="#363400"/><rect x="34.06" y="32.77" width="9.8" height="2.2" fill="#9a9500"/><rect x="34.06" y="35.88" width="9.8" height="4.0" fill="#363400"/><rect x="34.06" y="36.78" width="9.8" height="2.2" fill="#9a9500"/><rect x="34.06" y="39.89" width="9.8" height="4.0" fill="#363400"/><rect x="34.06" y="40.79" width="9.8" height="2.2" fill="#9a9500"/><rect x="34.06" y="43.90" width="9.8" height="4.0" fill="#363400"/><rect x="34.06" y="44.80" width="9.8" height="2.2" fill="#9a9500"/><rect x="34.06" y="47.91" width="9.8" height="4.0" fill="#363400"/><rect x="34.06" y="48.81" width="9.8" height="2.2" fill="#9a9500"/><rect x="34.06" y="51.92" width="9.8" height="4.0" fill="#363400"/><rect x="34.06" y="52.82" width="9.8" height="2.2" fill="#9a9500"/><rect x="34.06" y="55.93" width="9.8" height="4.0" fill="#363400"/><rect x="34.06" y="56.83" width="9.8" height="2.2" fill="#9a9500"/><rect x="34.06" y="59.94" width="9.8" height="4.0" fill="#363400"/><rect x="34.06" y="60.84" width="9.8" height="2.2" fill="#9a9500"/><rect x="34.06" y="63.95" width="9.8" height="4.0" fill="#5a5a00"/><rect x="34.06" y="64.85" width="9.8" height="2.2" fill="#ffff00"/><rect x="34.06" y="67.96" width="9.8" height="4.0" fill="#5a5a00"/><rect x="34.06" y="68.86" width="9.8" height="2.2" fill="#ffff00"/><rect x="34.06" y="71.97" width="9.8" height="4.0" fill="#5a5a00"/><rect x="34.06" y="72.87" width="9.8" height="2.2" fill="#ffff00"/><rect x="34.06" y="75.98" width="9.8" height="4.0" fill="#5a5a00"/><rect x="34.06" y="76.88" width="9.8" height="2.2" fill="#ffff00"/><rect x="34.06" y="79.99" width="9.8" height="4.0" fill="#005a00"/><rect x="34.06" y="80.89" width="9.8" height="2.2" fill="#00ff00"/><rect x="34.06" y="84.00" width="9.8" height="4.0" fill="#005a00"/><rect x="34.06" y="84.90" width="9.8" height="2.2" fill="#00ff00"/><rect x="34.06" y="88.01" width="9.8" height="4.0" fill="#005a00"/><rect x="34.06" y="88.91" width="9.8" height="2.2" fill="#00ff00"/><rect x="34.06" y="92.02" width="9.8" height="4.0" fill="#005a00"/><rect x="34.06" y="92.92" width="9.8" height="2.2" fill="#00ff00"/><rect x="34.06" y="96.03" width="9.8" height="4.0" fill="#005a00"/><rect x="34.06" y="96.93" width="9.8" height="2.2" fill="#00ff00"/><rect x="34.06" y="100.04" width="9.8" height="4.0" fill="#005a00"/><rect x="34.06" y="100.94" width="9.8" height="2.2" fill="#00ff00"/><rect x="34.06" y="104.05" width="9.8" height="4.0" fill="#005a00"/><rect x="34.06" y="104.95" width="9.8" height="2.2" fill="#00ff00"/><rect x="34.06" y="108.06" width="9.8" height="4.0" fill="#005a00"/><rect x="34.06" y="108.96" width="9.8" height="2.2" fill="#00ff00"/><rect x="34.06" y="112.07" width="9.8" height="4.0" fill="#005a00"/><rect x="34.06" y="112.97" width="9.8" height="2.2" fill="#00ff00"/><rect x="34.06" y="116.08" width="9.8" height="4.0" fill="#005a00"/><rect x="34.06" y="116.98" width="9.8" height="2.2" fill="#00ff00"/><rect x="34.06" y="120.09" width="9.8" height="4.0" fill="#005a00"/><rect x="34.06" y="120.99" width="9.8" height="2.2" fill="#00ff00"/><rect x="34.06" y="124.10" width="9.8" height="4.0" fill="#005a00"/><rect x="34.06" y="125.00" width="9.8" height="2.2" fill="#00ff00"/><rect x="34.06" y="128.11" width="9.8" height="4.0" fill="#005a00"/><rect x="34.06" y="129.01" width="9.8" height="2.2" fill="#00ff00"/><rect x="34.06" y="132.12" width="9.8" height="4.0" fill="#005a00"/><rect x="34.06" y="133.02" width="9.8" height="2.2" fill="#00ff00"/><rect x="34.06" y="136.13" width="9.8" height="4.0" fill="#005a00"/><rect x="34.06" y="137.03" width="9.8" height="2.2" fill="#00ff00"/><rect x="34.06" y="140.14" width="9.8" height="4.0" fill="#005a00"/><rect x="34.06" y="141.04" width="9.8" height="2.2" fill="#00ff00"/><rect x="34.06" y="144.15" width="9.8" height="4.0" fill="#005a00"/><rect x="34.06" y="145.05" width="9.8" height="2.2" fill="#00ff00"/><rect x="34.06" y="148.16" width="9.8" height="4.0" fill="#005a00"/><rect x="34.06" y="149.06" width="9.8" height="2.2" fill="#00ff00"/><rect x="34.06" y="152.17" width="9.8" height="4.0" fill="#005a00"/><rect x="34.06" y="153.07" width="9.8" height="2.2" fill="#00ff00"/><rect x="45.08" y="3.80" width="9.8" height="4.0" fill="#380000"/><rect x="45.08" y="4.70" width="9.8" height="2.2" fill="#8e0000"/><rect x="45.08" y="7.81" width="9.8" height="4.0" fill="#380000"/><rect x="45.08" y="8.71" width="9.8" height="2.2" fill="#8e0000"/><rect x="45.08" y="11.82" width="9.8" height="4.0" fill="#380000"/><rect x="45.08" y="12.72" width="9.8" height="2.2" fill="#8e0000"/><rect x="45.08" y="15.83" width="9.8" height="4.0" fill="#5a0000"/><rect x="45.08" y="16.73" width="9.8" height="2.2" fill="#ff0000"/><rect x="45.08" y="19.84" width="9.8" height="4.0" fill="#380000"/><rect x="45.08" y="20.74" width="9.8" height="2.2" fill="#8e0000"/><rect x="45.08" y="23.85" width="9.8" height="4.0" fill="#380000"/><rect x="45.08" y="24.75" width="9.8" height="2.2" fill="#8e0000"/><rect x="45.08" y="27.86" width="9.8" height="4.0" fill="#380000"/><rect x="45.08" y="28.76" width="9.8" height="2.2" fill="#8e0000"/><rect x="45.08" y="31.87" width="9.8" height="4.0" fill="#363400"/><rect x="45.08" y="32.77" width="9.8" height="2.2" fill="#9a9500"/><rect x="45.08" y="35.88" width="9.8" height="4.0" fill="#363400"/><rect x="45.08" y="36.78" width="9.8" height="2.2" fill="#9a9500"/><rect x="45.08" y="39.89" width="9.8" height="4.0" fill="#363400"/><rect x="45.08" y="40.79" width="9.8" height="2.2" fill="#9a9500"/><rect x="45.08" y="43.90" width="9.8" height="4.0" fill="#363400"/><rect x="45.08" y="44.80" width="9.8" height="2.2" fill="#9a9500"/><rect x="45.08" y="47.91" width="9.8" height="4.0" fill="#363400"/><rect x="45.08" y="48.81" width="9.8" height="2.2" fill="#9a9500"/><rect x="45.08" y="51.92" width="9.8" height="4.0" fill="#363400"/><rect x="45.08" y="52.82" width="9.8" height="2.2" fill="#9a9500"/><rect x="45.08" y="55.93" width="9.8" height="4.0" fill="#363400"/><rect x="45.08" y="56.83" width="9.8" height="2.2" fill="#9a9500"/><rect x="45.08" y="59.94" width="9.8" height="4.0" fill="#363400"/><rect x="45.08" y="60.84" width="9.8" height="2.2" fill="#9a9500"/><rect x="45.08" y="63.95" width="9.8" height="4.0" fill="#363400"/><rect x="45.08" y="64.85" width="9.8" height="2.2" fill="#9a9500"/><rect x="45.08" y="67.96" width="9.8" height="4.0" fill="#363400"/><rect x="45.08" y="68.86" width="9.8" height="2.2" fill="#9a9500"/><rect x="45.08" y="71.97" width="9.8" height="4.0" fill="#363400"/><rect x="45.08" y="72.87" width="9.8" height="2.2" fill="#9a9500"/><rect x="45.08" y="75.98" width="9.8" height="4.0" fill="#363400"/><rect x="45.08" y="76.88" width="9.8" height="2.2" fill="#9a9500"/><rect x="45.08" y="79.99" width="9.8" height="4.0" fill="#0a3a40"/><rect x="45.08" y="80.89" width="9.8" height="2.2" fill="#1a9cb0"/><rect x="45.08" y="84.00" width="9.8" height="4.0" fill="#0a3a40"/><rect x="45.08" y="84.90" width="9.8" height="2.2" fill="#1a9cb0"/><rect x="45.08" y="88.01" width="9.8" height="4.0" fill="#0a3a40"/><rect x="45.08" y="88.91" width="9.8" height="2.2" fill="#1a9cb0"/><rect x="45.08" y="92.02" width="9.8" height="4.0" fill="#0a3a40"/><rect x="45.08" y="92.92" width="9.8" height="2.2" fill="#1a9cb0"/><rect x="45.08" y="96.03" width="9.8" height="4.0" fill="#0a3a40"/><rect x="45.08" y="96.93" width="9.8" height="2.2" fill="#1a9cb0"/><rect x="45.08" y="100.04" width="9.8" height="4.0" fill="#005a00"/><rect x="45.08" y="100.94" width="9.8" height="2.2" fill="#00ff00"/><rect x="45.08" y="104.05" width="9.8" height="4.0" fill="#005a00"/><rect x="45.08" y="104.95" width="9.8" height="2.2" fill="#00ff00"/><rect x="45.08" y="108.06" width="9.8" height="4.0" fill="#005a00"/><rect x="45.08" y="108.96" width="9.8" height="2.2" fill="#00ff00"/><rect x="45.08" y="112.07" width="9.8" height="4.0" fill="#005a00"/><rect x="45.08" y="112.97" width="9.8" height="2.2" fill="#00ff00"/><rect x="45.08" y="116.08" width="9.8" height="4.0" fill="#005a00"/><rect x="45.08" y="116.98" width="9.8" height="2.2" fill="#00ff00"/><rect x="45.08" y="120.09" width="9.8" height="4.0" fill="#005a00"/><rect x="45.08" y="120.99" width="9.8" height="2.2" fill="#00ff00"/><rect x="45.08" y="124.10" width="9.8" height="4.0" fill="#005a00"/><rect x="45.08" y="125.00" width="9.8" height="2.2" fill="#00ff00"/><rect x="45.08" y="128.11" width="9.8" height="4.0" fill="#005a00"/><rect x="45.08" y="129.01" width="9.8" height="2.2" fill="#00ff00"/><rect x="45.08" y="132.12" width="9.8" height="4.0" fill="#005a00"/><rect x="45.08" y="133.02" width="9.8" height="2.2" fill="#00ff00"/><rect x="45.08" y="136.13" width="9.8" height="4.0" fill="#005a00"/><rect x="45.08" y="137.03" width="9.8" height="2.2" fill="#00ff00"/><rect x="45.08" y="140.14" width="9.8" height="4.0" fill="#005a00"/><rect x="45.08" y="141.04" width="9.8" height="2.2" fill="#00ff00"/><rect x="45.08" y="144.15" width="9.8" height="4.0" fill="#005a00"/><rect x="45.08" y="145.05" width="9.8" height="2.2" fill="#00ff00"/><rect x="45.08" y="148.16" width="9.8" height="4.0" fill="#005a00"/><rect x="45.08" y="149.06" width="9.8" height="2.2" fill="#00ff00"/><rect x="45.08" y="152.17" width="9.8" height="4.0" fill="#005a00"/><rect x="45.08" y="153.07" width="9.8" height="2.2" fill="#00ff00"/><rect x="56.10" y="3.80" width="9.8" height="4.0" fill="#380000"/><rect x="56.10" y="4.70" width="9.8" height="2.2" fill="#8e0000"/><rect x="56.10" y="7.81" width="9.8" height="4.0" fill="#380000"/><rect x="56.10" y="8.71" width="9.8" height="2.2" fill="#8e0000"/><rect x="56.10" y="11.82" width="9.8" height="4.0" fill="#380000"/><rect x="56.10" y="12.72" width="9.8" height="2.2" fill="#8e0000"/><rect x="56.10" y="15.83" width="9.8" height="4.0" fill="#5a0000"/><rect x="56.10" y="16.73" width="9.8" height="2.2" fill="#ff0000"/><rect x="56.10" y="19.84" width="9.8" height="4.0" fill="#380000"/><rect x="56.10" y="20.74" width="9.8" height="2.2" fill="#8e0000"/><rect x="56.10" y="23.85" width="9.8" height="4.0" fill="#380000"/><rect x="56.10" y="24.75" width="9.8" height="2.2" fill="#8e0000"/><rect x="56.10" y="27.86" width="9.8" height="4.0" fill="#380000"/><rect x="56.10" y="28.76" width="9.8" height="2.2" fill="#8e0000"/><rect x="56.10" y="31.87" width="9.8" height="4.0" fill="#363400"/><rect x="56.10" y="32.77" width="9.8" height="2.2" fill="#9a9500"/><rect x="56.10" y="35.88" width="9.8" height="4.0" fill="#363400"/><rect x="56.10" y="36.78" width="9.8" height="2.2" fill="#9a9500"/><rect x="56.10" y="39.89" width="9.8" height="4.0" fill="#363400"/><rect x="56.10" y="40.79" width="9.8" height="2.2" fill="#9a9500"/><rect x="56.10" y="43.90" width="9.8" height="4.0" fill="#363400"/><rect x="56.10" y="44.80" width="9.8" height="2.2" fill="#9a9500"/><rect x="56.10" y="47.91" width="9.8" height="4.0" fill="#363400"/><rect x="56.10" y="48.81" width="9.8" height="2.2" fill="#9a9500"/><rect x="56.10" y="51.92" width="9.8" height="4.0" fill="#363400"/><rect x="56.10" y="52.82" width="9.8" height="2.2" fill="#9a9500"/><rect x="56.10" y="55.93" width="9.8" height="4.0" fill="#363400"/><rect x="56.10" y="56.83" width="9.8" height="2.2" fill="#9a9500"/><rect x="56.10" y="59.94" width="9.8" height="4.0" fill="#363400"/><rect x="56.10" y="60.84" width="9.8" height="2.2" fill="#9a9500"/><rect x="56.10" y="63.95" width="9.8" height="4.0" fill="#363400"/><rect x="56.10" y="64.85" width="9.8" height="2.2" fill="#9a9500"/><rect x="56.10" y="67.96" width="9.8" height="4.0" fill="#363400"/><rect x="56.10" y="68.86" width="9.8" height="2.2" fill="#9a9500"/><rect x="56.10" y="71.97" width="9.8" height="4.0" fill="#363400"/><rect x="56.10" y="72.87" width="9.8" height="2.2" fill="#9a9500"/><rect x="56.10" y="75.98" width="9.8" height="4.0" fill="#363400"/><rect x="56.10" y="76.88" width="9.8" height="2.2" fill="#9a9500"/><rect x="56.10" y="79.99" width="9.8" height="4.0" fill="#0a3a40"/><rect x="56.10" y="80.89" width="9.8" height="2.2" fill="#1a9cb0"/><rect x="56.10" y="84.00" width="9.8" height="4.0" fill="#005a00"/><rect x="56.10" y="84.90" width="9.8" height="2.2" fill="#00ff00"/><rect x="56.10" y="88.01" width="9.8" height="4.0" fill="#005a00"/><rect x="56.10" y="88.91" width="9.8" height="2.2" fill="#00ff00"/><rect x="56.10" y="92.02" width="9.8" height="4.0" fill="#005a00"/><rect x="56.10" y="92.92" width="9.8" height="2.2" fill="#00ff00"/><rect x="56.10" y="96.03" width="9.8" height="4.0" fill="#005a00"/><rect x="56.10" y="96.93" width="9.8" height="2.2" fill="#00ff00"/><rect x="56.10" y="100.04" width="9.8" height="4.0" fill="#005a00"/><rect x="56.10" y="100.94" width="9.8" height="2.2" fill="#00ff00"/><rect x="56.10" y="104.05" width="9.8" height="4.0" fill="#005a00"/><rect x="56.10" y="104.95" width="9.8" height="2.2" fill="#00ff00"/><rect x="56.10" y="108.06" width="9.8" height="4.0" fill="#005a00"/><rect x="56.10" y="108.96" width="9.8" height="2.2" fill="#00ff00"/><rect x="56.10" y="112.07" width="9.8" height="4.0" fill="#005a00"/><rect x="56.10" y="112.97" width="9.8" height="2.2" fill="#00ff00"/><rect x="56.10" y="116.08" width="9.8" height="4.0" fill="#005a00"/><rect x="56.10" y="116.98" width="9.8" height="2.2" fill="#00ff00"/><rect x="56.10" y="120.09" width="9.8" height="4.0" fill="#005a00"/><rect x="56.10" y="120.99" width="9.8" height="2.2" fill="#00ff00"/><rect x="56.10" y="124.10" width="9.8" height="4.0" fill="#005a00"/><rect x="56.10" y="125.00" width="9.8" height="2.2" fill="#00ff00"/><rect x="56.10" y="128.11" width="9.8" height="4.0" fill="#005a00"/><rect x="56.10" y="129.01" width="9.8" height="2.2" fill="#00ff00"/><rect x="56.10" y="132.12" width="9.8" height="4.0" fill="#005a00"/><rect x="56.10" y="133.02" width="9.8" height="2.2" fill="#00ff00"/><rect x="56.10" y="136.13" width="9.8" height="4.0" fill="#005a00"/><rect x="56.10" y="137.03" width="9.8" height="2.2" fill="#00ff00"/><rect x="56.10" y="140.14" width="9.8" height="4.0" fill="#005a00"/><rect x="56.10" y="141.04" width="9.8" height="2.2" fill="#00ff00"/><rect x="56.10" y="144.15" width="9.8" height="4.0" fill="#005a00"/><rect x="56.10" y="145.05" width="9.8" height="2.2" fill="#00ff00"/><rect x="56.10" y="148.16" width="9.8" height="4.0" fill="#005a00"/><rect x="56.10" y="149.06" width="9.8" height="2.2" fill="#00ff00"/><rect x="56.10" y="152.17" width="9.8" height="4.0" fill="#005a00"/><rect x="56.10" y="153.07" width="9.8" height="2.2" fill="#00ff00"/><rect x="67.12" y="3.80" width="9.8" height="4.0" fill="#380000"/><rect x="67.12" y="4.70" width="9.8" height="2.2" fill="#8e0000"/><rect x="67.12" y="7.81" width="9.8" height="4.0" fill="#380000"/><rect x="67.12" y="8.71" width="9.8" height="2.2" fill="#8e0000"/><rect x="67.12" y="11.82" width="9.8" height="4.0" fill="#380000"/><rect x="67.12" y="12.72" width="9.8" height="2.2" fill="#8e0000"/><rect x="67.12" y="15.83" width="9.8" height="4.0" fill="#5a0000"/><rect x="67.12" y="16.73" width="9.8" height="2.2" fill="#ff0000"/><rect x="67.12" y="19.84" width="9.8" height="4.0" fill="#380000"/><rect x="67.12" y="20.74" width="9.8" height="2.2" fill="#8e0000"/><rect x="67.12" y="23.85" width="9.8" height="4.0" fill="#380000"/><rect x="67.12" y="24.75" width="9.8" height="2.2" fill="#8e0000"/><rect x="67.12" y="27.86" width="9.8" height="4.0" fill="#380000"/><rect x="67.12" y="28.76" width="9.8" height="2.2" fill="#8e0000"/><rect x="67.12" y="31.87" width="9.8" height="4.0" fill="#363400"/><rect x="67.12" y="32.77" width="9.8" height="2.2" fill="#9a9500"/><rect x="67.12" y="35.88" width="9.8" height="4.0" fill="#363400"/><rect x="67.12" y="36.78" width="9.8" height="2.2" fill="#9a9500"/><rect x="67.12" y="39.89" width="9.8" height="4.0" fill="#363400"/><rect x="67.12" y="40.79" width="9.8" height="2.2" fill="#9a9500"/><rect x="67.12" y="43.90" width="9.8" height="4.0" fill="#363400"/><rect x="67.12" y="44.80" width="9.8" height="2.2" fill="#9a9500"/><rect x="67.12" y="47.91" width="9.8" height="4.0" fill="#363400"/><rect x="67.12" y="48.81" width="9.8" height="2.2" fill="#9a9500"/><rect x="67.12" y="51.92" width="9.8" height="4.0" fill="#363400"/><rect x="67.12" y="52.82" width="9.8" height="2.2" fill="#9a9500"/><rect x="67.12" y="55.93" width="9.8" height="4.0" fill="#363400"/><rect x="67.12" y="56.83" width="9.8" height="2.2" fill="#9a9500"/><rect x="67.12" y="59.94" width="9.8" height="4.0" fill="#363400"/><rect x="67.12" y="60.84" width="9.8" height="2.2" fill="#9a9500"/><rect x="67.12" y="63.95" width="9.8" height="4.0" fill="#363400"/><rect x="67.12" y="64.85" width="9.8" height="2.2" fill="#9a9500"/><rect x="67.12" y="67.96" width="9.8" height="4.0" fill="#363400"/><rect x="67.12" y="68.86" width="9.8" height="2.2" fill="#9a9500"/><rect x="67.12" y="71.97" width="9.8" height="4.0" fill="#363400"/><rect x="67.12" y="72.87" width="9.8" height="2.2" fill="#9a9500"/><rect x="67.12" y="75.98" width="9.8" height="4.0" fill="#363400"/><rect x="67.12" y="76.88" width="9.8" height="2.2" fill="#9a9500"/><rect x="67.12" y="79.99" width="9.8" height="4.0" fill="#0a3a40"/><rect x="67.12" y="80.89" width="9.8" height="2.2" fill="#1a9cb0"/><rect x="67.12" y="84.00" width="9.8" height="4.0" fill="#0a3a40"/><rect x="67.12" y="84.90" width="9.8" height="2.2" fill="#1a9cb0"/><rect x="67.12" y="88.01" width="9.8" height="4.0" fill="#0a3a40"/><rect x="67.12" y="88.91" width="9.8" height="2.2" fill="#1a9cb0"/><rect x="67.12" y="92.02" width="9.8" height="4.0" fill="#0a3a40"/><rect x="67.12" y="92.92" width="9.8" height="2.2" fill="#1a9cb0"/><rect x="67.12" y="96.03" width="9.8" height="4.0" fill="#0a3a40"/><rect x="67.12" y="96.93" width="9.8" height="2.2" fill="#1a9cb0"/><rect x="67.12" y="100.04" width="9.8" height="4.0" fill="#0a3a40"/><rect x="67.12" y="100.94" width="9.8" height="2.2" fill="#1a9cb0"/><rect x="67.12" y="104.05" width="9.8" height="4.0" fill="#0a3a40"/><rect x="67.12" y="104.95" width="9.8" height="2.2" fill="#1a9cb0"/><rect x="67.12" y="108.06" width="9.8" height="4.0" fill="#0a3a40"/><rect x="67.12" y="108.96" width="9.8" height="2.2" fill="#1a9cb0"/><rect x="67.12" y="112.07" width="9.8" height="4.0" fill="#0a3a40"/><rect x="67.12" y="112.97" width="9.8" height="2.2" fill="#1a9cb0"/><rect x="67.12" y="116.08" width="9.8" height="4.0" fill="#0a3a40"/><rect x="67.12" y="116.98" width="9.8" height="2.2" fill="#1a9cb0"/><rect x="67.12" y="120.09" width="9.8" height="4.0" fill="#0a3a40"/><rect x="67.12" y="120.99" width="9.8" height="2.2" fill="#1a9cb0"/><rect x="67.12" y="124.10" width="9.8" height="4.0" fill="#0a3a40"/><rect x="67.12" y="125.00" width="9.8" height="2.2" fill="#1a9cb0"/><rect x="67.12" y="128.11" width="9.8" height="4.0" fill="#0a3a40"/><rect x="67.12" y="129.01" width="9.8" height="2.2" fill="#1a9cb0"/><rect x="67.12" y="132.12" width="9.8" height="4.0" fill="#0a3a40"/><rect x="67.12" y="133.02" width="9.8" height="2.2" fill="#1a9cb0"/><rect x="67.12" y="136.13" width="9.8" height="4.0" fill="#0a3a40"/><rect x="67.12" y="137.03" width="9.8" height="2.2" fill="#1a9cb0"/><rect x="67.12" y="140.14" width="9.8" height="4.0" fill="#0a3a40"/><rect x="67.12" y="141.04" width="9.8" height="2.2" fill="#1a9cb0"/><rect x="67.12" y="144.15" width="9.8" height="4.0" fill="#0a3a40"/><rect x="67.12" y="145.05" width="9.8" height="2.2" fill="#1a9cb0"/><rect x="67.12" y="148.16" width="9.8" height="4.0" fill="#0a3a40"/><rect x="67.12" y="149.06" width="9.8" height="2.2" fill="#1a9cb0"/><rect x="67.12" y="152.17" width="9.8" height="4.0" fill="#0a3a40"/><rect x="67.12" y="153.07" width="9.8" height="2.2" fill="#1a9cb0"/><rect x="78.14" y="3.80" width="9.8" height="4.0" fill="#380000"/><rect x="78.14" y="4.70" width="9.8" height="2.2" fill="#8e0000"/><rect x="78.14" y="7.81" width="9.8" height="4.0" fill="#380000"/><rect x="78.14" y="8.71" width="9.8" height="2.2" fill="#8e0000"/><rect x="78.14" y="11.82" width="9.8" height="4.0" fill="#380000"/><rect x="78.14" y="12.72" width="9.8" height="2.2" fill="#8e0000"/><rect x="78.14" y="15.83" width="9.8" height="4.0" fill="#5a0000"/><rect x="78.14" y="16.73" width="9.8" height="2.2" fill="#ff0000"/><rect x="78.14" y="19.84" width="9.8" height="4.0" fill="#380000"/><rect x="78.14" y="20.74" width="9.8" height="2.2" fill="#8e0000"/><rect x="78.14" y="23.85" width="9.8" height="4.0" fill="#380000"/><rect x="78.14" y="24.75" width="9.8" height="2.2" fill="#8e0000"/><rect x="78.14" y="27.86" width="9.8" height="4.0" fill="#380000"/><rect x="78.14" y="28.76" width="9.8" height="2.2" fill="#8e0000"/><rect x="78.14" y="31.87" width="9.8" height="4.0" fill="#363400"/><rect x="78.14" y="32.77" width="9.8" height="2.2" fill="#9a9500"/><rect x="78.14" y="35.88" width="9.8" height="4.0" fill="#363400"/><rect x="78.14" y="36.78" width="9.8" height="2.2" fill="#9a9500"/><rect x="78.14" y="39.89" width="9.8" height="4.0" fill="#363400"/><rect x="78.14" y="40.79" width="9.8" height="2.2" fill="#9a9500"/><rect x="78.14" y="43.90" width="9.8" height="4.0" fill="#363400"/><rect x="78.14" y="44.80" width="9.8" height="2.2" fill="#9a9500"/><rect x="78.14" y="47.91" width="9.8" height="4.0" fill="#363400"/><rect x="78.14" y="48.81" width="9.8" height="2.2" fill="#9a9500"/><rect x="78.14" y="51.92" width="9.8" height="4.0" fill="#363400"/><rect x="78.14" y="52.82" width="9.8" height="2.2" fill="#9a9500"/><rect x="78.14" y="55.93" width="9.8" height="4.0" fill="#363400"/><rect x="78.14" y="56.83" width="9.8" height="2.2" fill="#9a9500"/><rect x="78.14" y="59.94" width="9.8" height="4.0" fill="#363400"/><rect x="78.14" y="60.84" width="9.8" height="2.2" fill="#9a9500"/><rect x="78.14" y="63.95" width="9.8" height="4.0" fill="#363400"/><rect x="78.14" y="64.85" width="9.8" height="2.2" fill="#9a9500"/><rect x="78.14" y="67.96" width="9.8" height="4.0" fill="#363400"/><rect x="78.14" y="68.86" width="9.8" height="2.2" fill="#9a9500"/><rect x="78.14" y="71.97" width="9.8" height="4.0" fill="#363400"/><rect x="78.14" y="72.87" width="9.8" height="2.2" fill="#9a9500"/><rect x="78.14" y="75.98" width="9.8" height="4.0" fill="#363400"/><rect x="78.14" y="76.88" width="9.8" height="2.2" fill="#9a9500"/><rect x="78.14" y="79.99" width="9.8" height="4.0" fill="#0a3a40"/><rect x="78.14" y="80.89" width="9.8" height="2.2" fill="#1a9cb0"/><rect x="78.14" y="84.00" width="9.8" height="4.0" fill="#0a3a40"/><rect x="78.14" y="84.90" width="9.8" height="2.2" fill="#1a9cb0"/><rect x="78.14" y="88.01" width="9.8" height="4.0" fill="#0a3a40"/><rect x="78.14" y="88.91" width="9.8" height="2.2" fill="#1a9cb0"/><rect x="78.14" y="92.02" width="9.8" height="4.0" fill="#0a3a40"/><rect x="78.14" y="92.92" width="9.8" height="2.2" fill="#1a9cb0"/><rect x="78.14" y="96.03" width="9.8" height="4.0" fill="#0a3a40"/><rect x="78.14" y="96.93" width="9.8" height="2.2" fill="#1a9cb0"/><rect x="78.14" y="100.04" width="9.8" height="4.0" fill="#0a3a40"/><rect x="78.14" y="100.94" width="9.8" height="2.2" fill="#1a9cb0"/><rect x="78.14" y="104.05" width="9.8" height="4.0" fill="#0a3a40"/><rect x="78.14" y="104.95" width="9.8" height="2.2" fill="#1a9cb0"/><rect x="78.14" y="108.06" width="9.8" height="4.0" fill="#0a3a40"/><rect x="78.14" y="108.96" width="9.8" height="2.2" fill="#1a9cb0"/><rect x="78.14" y="112.07" width="9.8" height="4.0" fill="#0a3a40"/><rect x="78.14" y="112.97" width="9.8" height="2.2" fill="#1a9cb0"/><rect x="78.14" y="116.08" width="9.8" height="4.0" fill="#0a3a40"/><rect x="78.14" y="116.98" width="9.8" height="2.2" fill="#1a9cb0"/><rect x="78.14" y="120.09" width="9.8" height="4.0" fill="#0a3a40"/><rect x="78.14" y="120.99" width="9.8" height="2.2" fill="#1a9cb0"/><rect x="78.14" y="124.10" width="9.8" height="4.0" fill="#0a3a40"/><rect x="78.14" y="125.00" width="9.8" height="2.2" fill="#1a9cb0"/><rect x="78.14" y="128.11" width="9.8" height="4.0" fill="#0a3a40"/><rect x="78.14" y="129.01" width="9.8" height="2.2" fill="#1a9cb0"/><rect x="78.14" y="132.12" width="9.8" height="4.0" fill="#0a3a40"/><rect x="78.14" y="133.02" width="9.8" height="2.2" fill="#1a9cb0"/><rect x="78.14" y="136.13" width="9.8" height="4.0" fill="#0a3a40"/><rect x="78.14" y="137.03" width="9.8" height="2.2" fill="#1a9cb0"/><rect x="78.14" y="140.14" width="9.8" height="4.0" fill="#0a3a40"/><rect x="78.14" y="141.04" width="9.8" height="2.2" fill="#1a9cb0"/><rect x="78.14" y="144.15" width="9.8" height="4.0" fill="#0a3a40"/><rect x="78.14" y="145.05" width="9.8" height="2.2" fill="#1a9cb0"/><rect x="78.14" y="148.16" width="9.8" height="4.0" fill="#0a3a40"/><rect x="78.14" y="149.06" width="9.8" height="2.2" fill="#1a9cb0"/><rect x="78.14" y="152.17" width="9.8" height="4.0" fill="#0a3a40"/><rect x="78.14" y="153.07" width="9.8" height="2.2" fill="#1a9cb0"/><rect x="89.16" y="3.80" width="9.8" height="4.0" fill="#380000"/><rect x="89.16" y="4.70" width="9.8" height="2.2" fill="#8e0000"/><rect x="89.16" y="7.81" width="9.8" height="4.0" fill="#380000"/><rect x="89.16" y="8.71" width="9.8" height="2.2" fill="#8e0000"/><rect x="89.16" y="11.82" width="9.8" height="4.0" fill="#380000"/><rect x="89.16" y="12.72" width="9.8" height="2.2" fill="#8e0000"/><rect x="89.16" y="15.83" width="9.8" height="4.0" fill="#5a0000"/><rect x="89.16" y="16.73" width="9.8" height="2.2" fill="#ff0000"/><rect x="89.16" y="19.84" width="9.8" height="4.0" fill="#380000"/><rect x="89.16" y="20.74" width="9.8" height="2.2" fill="#8e0000"/><rect x="89.16" y="23.85" width="9.8" height="4.0" fill="#380000"/><rect x="89.16" y="24.75" width="9.8" height="2.2" fill="#8e0000"/><rect x="89.16" y="27.86" width="9.8" height="4.0" fill="#380000"/><rect x="89.16" y="28.76" width="9.8" height="2.2" fill="#8e0000"/><rect x="89.16" y="31.87" width="9.8" height="4.0" fill="#363400"/><rect x="89.16" y="32.77" width="9.8" height="2.2" fill="#9a9500"/><rect x="89.16" y="35.88" width="9.8" height="4.0" fill="#363400"/><rect x="89.16" y="36.78" width="9.8" height="2.2" fill="#9a9500"/><rect x="89.16" y="39.89" width="9.8" height="4.0" fill="#363400"/><rect x="89.16" y="40.79" width="9.8" height="2.2" fill="#9a9500"/><rect x="89.16" y="43.90" width="9.8" height="4.0" fill="#363400"/><rect x="89.16" y="44.80" width="9.8" height="2.2" fill="#9a9500"/><rect x="89.16" y="47.91" width="9.8" height="4.0" fill="#363400"/><rect x="89.16" y="48.81" width="9.8" height="2.2" fill="#9a9500"/><rect x="89.16" y="51.92" width="9.8" height="4.0" fill="#363400"/><rect x="89.16" y="52.82" width="9.8" height="2.2" fill="#9a9500"/><rect x="89.16" y="55.93" width="9.8" height="4.0" fill="#363400"/><rect x="89.16" y="56.83" width="9.8" height="2.2" fill="#9a9500"/><rect x="89.16" y="59.94" width="9.8" height="4.0" fill="#363400"/><rect x="89.16" y="60.84" width="9.8" height="2.2" fill="#9a9500"/><rect x="89.16" y="63.95" width="9.8" height="4.0" fill="#363400"/><rect x="89.16" y="64.85" width="9.8" height="2.2" fill="#9a9500"/><rect x="89.16" y="67.96" width="9.8" height="4.0" fill="#363400"/><rect x="89.16" y="68.86" width="9.8" height="2.2" fill="#9a9500"/><rect x="89.16" y="71.97" width="9.8" height="4.0" fill="#363400"/><rect x="89.16" y="72.87" width="9.8" height="2.2" fill="#9a9500"/><rect x="89.16" y="75.98" width="9.8" height="4.0" fill="#363400"/><rect x="89.16" y="76.88" width="9.8" height="2.2" fill="#9a9500"/><rect x="89.16" y="79.99" width="9.8" height="4.0" fill="#0a3a40"/><rect x="89.16" y="80.89" width="9.8" height="2.2" fill="#1a9cb0"/><rect x="89.16" y="84.00" width="9.8" height="4.0" fill="#0a3a40"/><rect x="89.16" y="84.90" width="9.8" height="2.2" fill="#1a9cb0"/><rect x="89.16" y="88.01" width="9.8" height="4.0" fill="#0a3a40"/><rect x="89.16" y="88.91" width="9.8" height="2.2" fill="#1a9cb0"/><rect x="89.16" y="92.02" width="9.8" height="4.0" fill="#0a3a40"/><rect x="89.16" y="92.92" width="9.8" height="2.2" fill="#1a9cb0"/><rect x="89.16" y="96.03" width="9.8" height="4.0" fill="#0a3a40"/><rect x="89.16" y="96.93" width="9.8" height="2.2" fill="#1a9cb0"/><rect x="89.16" y="100.04" width="9.8" height="4.0" fill="#0a3a40"/><rect x="89.16" y="100.94" width="9.8" height="2.2" fill="#1a9cb0"/><rect x="89.16" y="104.05" width="9.8" height="4.0" fill="#0a3a40"/><rect x="89.16" y="104.95" width="9.8" height="2.2" fill="#1a9cb0"/><rect x="89.16" y="108.06" width="9.8" height="4.0" fill="#0a3a40"/><rect x="89.16" y="108.96" width="9.8" height="2.2" fill="#1a9cb0"/><rect x="89.16" y="112.07" width="9.8" height="4.0" fill="#005a00"/><rect x="89.16" y="112.97" width="9.8" height="2.2" fill="#00ff00"/><rect x="89.16" y="116.08" width="9.8" height="4.0" fill="#005a00"/><rect x="89.16" y="116.98" width="9.8" height="2.2" fill="#00ff00"/><rect x="89.16" y="120.09" width="9.8" height="4.0" fill="#005a00"/><rect x="89.16" y="120.99" width="9.8" height="2.2" fill="#00ff00"/><rect x="89.16" y="124.10" width="9.8" height="4.0" fill="#005a00"/><rect x="89.16" y="125.00" width="9.8" height="2.2" fill="#00ff00"/><rect x="89.16" y="128.11" width="9.8" height="4.0" fill="#005a00"/><rect x="89.16" y="129.01" width="9.8" height="2.2" fill="#00ff00"/><rect x="89.16" y="132.12" width="9.8" height="4.0" fill="#005a00"/><rect x="89.16" y="133.02" width="9.8" height="2.2" fill="#00ff00"/><rect x="89.16" y="136.13" width="9.8" height="4.0" fill="#005a00"/><rect x="89.16" y="137.03" width="9.8" height="2.2" fill="#00ff00"/><rect x="89.16" y="140.14" width="9.8" height="4.0" fill="#005a00"/><rect x="89.16" y="141.04" width="9.8" height="2.2" fill="#00ff00"/><rect x="89.16" y="144.15" width="9.8" height="4.0" fill="#005a00"/><rect x="89.16" y="145.05" width="9.8" height="2.2" fill="#00ff00"/><rect x="89.16" y="148.16" width="9.8" height="4.0" fill="#005a00"/><rect x="89.16" y="149.06" width="9.8" height="2.2" fill="#00ff00"/><rect x="89.16" y="152.17" width="9.8" height="4.0" fill="#005a00"/><rect x="89.16" y="153.07" width="9.8" height="2.2" fill="#00ff00"/><rect x="100.18" y="3.80" width="9.8" height="4.0" fill="#380000"/><rect x="100.18" y="4.70" width="9.8" height="2.2" fill="#8e0000"/><rect x="100.18" y="7.81" width="9.8" height="4.0" fill="#380000"/><rect x="100.18" y="8.71" width="9.8" height="2.2" fill="#8e0000"/><rect x="100.18" y="11.82" width="9.8" height="4.0" fill="#380000"/><rect x="100.18" y="12.72" width="9.8" height="2.2" fill="#8e0000"/><rect x="100.18" y="15.83" width="9.8" height="4.0" fill="#5a0000"/><rect x="100.18" y="16.73" width="9.8" height="2.2" fill="#ff0000"/><rect x="100.18" y="19.84" width="9.8" height="4.0" fill="#380000"/><rect x="100.18" y="20.74" width="9.8" height="2.2" fill="#8e0000"/><rect x="100.18" y="23.85" width="9.8" height="4.0" fill="#380000"/><rect x="100.18" y="24.75" width="9.8" height="2.2" fill="#8e0000"/><rect x="100.18" y="27.86" width="9.8" height="4.0" fill="#380000"/><rect x="100.18" y="28.76" width="9.8" height="2.2" fill="#8e0000"/><rect x="100.18" y="31.87" width="9.8" height="4.0" fill="#363400"/><rect x="100.18" y="32.77" width="9.8" height="2.2" fill="#9a9500"/><rect x="100.18" y="35.88" width="9.8" height="4.0" fill="#363400"/><rect x="100.18" y="36.78" width="9.8" height="2.2" fill="#9a9500"/><rect x="100.18" y="39.89" width="9.8" height="4.0" fill="#363400"/><rect x="100.18" y="40.79" width="9.8" height="2.2" fill="#9a9500"/><rect x="100.18" y="43.90" width="9.8" height="4.0" fill="#363400"/><rect x="100.18" y="44.80" width="9.8" height="2.2" fill="#9a9500"/><rect x="100.18" y="47.91" width="9.8" height="4.0" fill="#363400"/><rect x="100.18" y="48.81" width="9.8" height="2.2" fill="#9a9500"/><rect x="100.18" y="51.92" width="9.8" height="4.0" fill="#363400"/><rect x="100.18" y="52.82" width="9.8" height="2.2" fill="#9a9500"/><rect x="100.18" y="55.93" width="9.8" height="4.0" fill="#363400"/><rect x="100.18" y="56.83" width="9.8" height="2.2" fill="#9a9500"/><rect x="100.18" y="59.94" width="9.8" height="4.0" fill="#363400"/><rect x="100.18" y="60.84" width="9.8" height="2.2" fill="#9a9500"/><rect x="100.18" y="63.95" width="9.8" height="4.0" fill="#5a5a00"/><rect x="100.18" y="64.85" width="9.8" height="2.2" fill="#ffff00"/><rect x="100.18" y="67.96" width="9.8" height="4.0" fill="#5a5a00"/><rect x="100.18" y="68.86" width="9.8" height="2.2" fill="#ffff00"/><rect x="100.18" y="71.97" width="9.8" height="4.0" fill="#5a5a00"/><rect x="100.18" y="72.87" width="9.8" height="2.2" fill="#ffff00"/><rect x="100.18" y="75.98" width="9.8" height="4.0" fill="#5a5a00"/><rect x="100.18" y="76.88" width="9.8" height="2.2" fill="#ffff00"/><rect x="100.18" y="79.99" width="9.8" height="4.0" fill="#005a00"/><rect x="100.18" y="80.89" width="9.8" height="2.2" fill="#00ff00"/><rect x="100.18" y="84.00" width="9.8" height="4.0" fill="#005a00"/><rect x="100.18" y="84.90" width="9.8" height="2.2" fill="#00ff00"/><rect x="100.18" y="88.01" width="9.8" height="4.0" fill="#005a00"/><rect x="100.18" y="88.91" width="9.8" height="2.2" fill="#00ff00"/><rect x="100.18" y="92.02" width="9.8" height="4.0" fill="#005a00"/><rect x="100.18" y="92.92" width="9.8" height="2.2" fill="#00ff00"/><rect x="100.18" y="96.03" width="9.8" height="4.0" fill="#005a00"/><rect x="100.18" y="96.93" width="9.8" height="2.2" fill="#00ff00"/><rect x="100.18" y="100.04" width="9.8" height="4.0" fill="#005a00"/><rect x="100.18" y="100.94" width="9.8" height="2.2" fill="#00ff00"/><rect x="100.18" y="104.05" width="9.8" height="4.0" fill="#005a00"/><rect x="100.18" y="104.95" width="9.8" height="2.2" fill="#00ff00"/><rect x="100.18" y="108.06" width="9.8" height="4.0" fill="#005a00"/><rect x="100.18" y="108.96" width="9.8" height="2.2" fill="#00ff00"/><rect x="100.18" y="112.07" width="9.8" height="4.0" fill="#005a00"/><rect x="100.18" y="112.97" width="9.8" height="2.2" fill="#00ff00"/><rect x="100.18" y="116.08" width="9.8" height="4.0" fill="#005a00"/><rect x="100.18" y="116.98" width="9.8" height="2.2" fill="#00ff00"/><rect x="100.18" y="120.09" width="9.8" height="4.0" fill="#005a00"/><rect x="100.18" y="120.99" width="9.8" height="2.2" fill="#00ff00"/><rect x="100.18" y="124.10" width="9.8" height="4.0" fill="#005a00"/><rect x="100.18" y="125.00" width="9.8" height="2.2" fill="#00ff00"/><rect x="100.18" y="128.11" width="9.8" height="4.0" fill="#005a00"/><rect x="100.18" y="129.01" width="9.8" height="2.2" fill="#00ff00"/><rect x="100.18" y="132.12" width="9.8" height="4.0" fill="#005a00"/><rect x="100.18" y="133.02" width="9.8" height="2.2" fill="#00ff00"/><rect x="100.18" y="136.13" width="9.8" height="4.0" fill="#005a00"/><rect x="100.18" y="137.03" width="9.8" height="2.2" fill="#00ff00"/><rect x="100.18" y="140.14" width="9.8" height="4.0" fill="#005a00"/><rect x="100.18" y="141.04" width="9.8" height="2.2" fill="#00ff00"/><rect x="100.18" y="144.15" width="9.8" height="4.0" fill="#005a00"/><rect x="100.18" y="145.05" width="9.8" height="2.2" fill="#00ff00"/><rect x="100.18" y="148.16" width="9.8" height="4.0" fill="#005a00"/><rect x="100.18" y="149.06" width="9.8" height="2.2" fill="#00ff00"/><rect x="100.18" y="152.17" width="9.8" height="4.0" fill="#005a00"/><rect x="100.18" y="153.07" width="9.8" height="2.2" fill="#00ff00"/><rect x="111.20" y="3.80" width="9.8" height="4.0" fill="#380000"/><rect x="111.20" y="4.70" width="9.8" height="2.2" fill="#8e0000"/><rect x="111.20" y="7.81" width="9.8" height="4.0" fill="#380000"/><rect x="111.20" y="8.71" width="9.8" height="2.2" fill="#8e0000"/><rect x="111.20" y="11.82" width="9.8" height="4.0" fill="#380000"/><rect x="111.20" y="12.72" width="9.8" height="2.2" fill="#8e0000"/><rect x="111.20" y="15.83" width="9.8" height="4.0" fill="#5a0000"/><rect x="111.20" y="16.73" width="9.8" height="2.2" fill="#ff0000"/><rect x="111.20" y="19.84" width="9.8" height="4.0" fill="#380000"/><rect x="111.20" y="20.74" width="9.8" height="2.2" fill="#8e0000"/><rect x="111.20" y="23.85" width="9.8" height="4.0" fill="#380000"/><rect x="111.20" y="24.75" width="9.8" height="2.2" fill="#8e0000"/><rect x="111.20" y="27.86" width="9.8" height="4.0" fill="#380000"/><rect x="111.20" y="28.76" width="9.8" height="2.2" fill="#8e0000"/><rect x="111.20" y="31.87" width="9.8" height="4.0" fill="#363400"/><rect x="111.20" y="32.77" width="9.8" height="2.2" fill="#9a9500"/><rect x="111.20" y="35.88" width="9.8" height="4.0" fill="#363400"/><rect x="111.20" y="36.78" width="9.8" height="2.2" fill="#9a9500"/><rect x="111.20" y="39.89" width="9.8" height="4.0" fill="#363400"/><rect x="111.20" y="40.79" width="9.8" height="2.2" fill="#9a9500"/><rect x="111.20" y="43.90" width="9.8" height="4.0" fill="#363400"/><rect x="111.20" y="44.80" width="9.8" height="2.2" fill="#9a9500"/><rect x="111.20" y="47.91" width="9.8" height="4.0" fill="#363400"/><rect x="111.20" y="48.81" width="9.8" height="2.2" fill="#9a9500"/><rect x="111.20" y="51.92" width="9.8" height="4.0" fill="#363400"/><rect x="111.20" y="52.82" width="9.8" height="2.2" fill="#9a9500"/><rect x="111.20" y="55.93" width="9.8" height="4.0" fill="#5a5a00"/><rect x="111.20" y="56.83" width="9.8" height="2.2" fill="#ffff00"/><rect x="111.20" y="59.94" width="9.8" height="4.0" fill="#5a5a00"/><rect x="111.20" y="60.84" width="9.8" height="2.2" fill="#ffff00"/><rect x="111.20" y="63.95" width="9.8" height="4.0" fill="#5a5a00"/><rect x="111.20" y="64.85" width="9.8" height="2.2" fill="#ffff00"/><rect x="111.20" y="67.96" width="9.8" height="4.0" fill="#5a5a00"/><rect x="111.20" y="68.86" width="9.8" height="2.2" fill="#ffff00"/><rect x="111.20" y="71.97" width="9.8" height="4.0" fill="#5a5a00"/><rect x="111.20" y="72.87" width="9.8" height="2.2" fill="#ffff00"/><rect x="111.20" y="75.98" width="9.8" height="4.0" fill="#5a5a00"/><rect x="111.20" y="76.88" width="9.8" height="2.2" fill="#ffff00"/><rect x="111.20" y="79.99" width="9.8" height="4.0" fill="#005a00"/><rect x="111.20" y="80.89" width="9.8" height="2.2" fill="#00ff00"/><rect x="111.20" y="84.00" width="9.8" height="4.0" fill="#005a00"/><rect x="111.20" y="84.90" width="9.8" height="2.2" fill="#00ff00"/><rect x="111.20" y="88.01" width="9.8" height="4.0" fill="#005a00"/><rect x="111.20" y="88.91" width="9.8" height="2.2" fill="#00ff00"/><rect x="111.20" y="92.02" width="9.8" height="4.0" fill="#005a00"/><rect x="111.20" y="92.92" width="9.8" height="2.2" fill="#00ff00"/><rect x="111.20" y="96.03" width="9.8" height="4.0" fill="#005a00"/><rect x="111.20" y="96.93" width="9.8" height="2.2" fill="#00ff00"/><rect x="111.20" y="100.04" width="9.8" height="4.0" fill="#005a00"/><rect x="111.20" y="100.94" width="9.8" height="2.2" fill="#00ff00"/><rect x="111.20" y="104.05" width="9.8" height="4.0" fill="#005a00"/><rect x="111.20" y="104.95" width="9.8" height="2.2" fill="#00ff00"/><rect x="111.20" y="108.06" width="9.8" height="4.0" fill="#005a00"/><rect x="111.20" y="108.96" width="9.8" height="2.2" fill="#00ff00"/><rect x="111.20" y="112.07" width="9.8" height="4.0" fill="#005a00"/><rect x="111.20" y="112.97" width="9.8" height="2.2" fill="#00ff00"/><rect x="111.20" y="116.08" width="9.8" height="4.0" fill="#005a00"/><rect x="111.20" y="116.98" width="9.8" height="2.2" fill="#00ff00"/><rect x="111.20" y="120.09" width="9.8" height="4.0" fill="#005a00"/><rect x="111.20" y="120.99" width="9.8" height="2.2" fill="#00ff00"/><rect x="111.20" y="124.10" width="9.8" height="4.0" fill="#005a00"/><rect x="111.20" y="125.00" width="9.8" height="2.2" fill="#00ff00"/><rect x="111.20" y="128.11" width="9.8" height="4.0" fill="#005a00"/><rect x="111.20" y="129.01" width="9.8" height="2.2" fill="#00ff00"/><rect x="111.20" y="132.12" width="9.8" height="4.0" fill="#005a00"/><rect x="111.20" y="133.02" width="9.8" height="2.2" fill="#00ff00"/><rect x="111.20" y="136.13" width="9.8" height="4.0" fill="#005a00"/><rect x="111.20" y="137.03" width="9.8" height="2.2" fill="#00ff00"/><rect x="111.20" y="140.14" width="9.8" height="4.0" fill="#005a00"/><rect x="111.20" y="141.04" width="9.8" height="2.2" fill="#00ff00"/><rect x="111.20" y="144.15" width="9.8" height="4.0" fill="#005a00"/><rect x="111.20" y="145.05" width="9.8" height="2.2" fill="#00ff00"/><rect x="111.20" y="148.16" width="9.8" height="4.0" fill="#005a00"/><rect x="111.20" y="149.06" width="9.8" height="2.2" fill="#00ff00"/><rect x="111.20" y="152.17" width="9.8" height="4.0" fill="#005a00"/><rect x="111.20" y="153.07" width="9.8" height="2.2" fill="#00ff00"/><rect x="122.22" y="3.80" width="9.8" height="4.0" fill="#380000"/><rect x="122.22" y="4.70" width="9.8" height="2.2" fill="#8e0000"/><rect x="122.22" y="7.81" width="9.8" height="4.0" fill="#5a0000"/><rect x="122.22" y="8.71" width="9.8" height="2.2" fill="#ff0000"/><rect x="122.22" y="11.82" width="9.8" height="4.0" fill="#5a0000"/><rect x="122.22" y="12.72" width="9.8" height="2.2" fill="#ff0000"/><rect x="122.22" y="15.83" width="9.8" height="4.0" fill="#5a0000"/><rect x="122.22" y="16.73" width="9.8" height="2.2" fill="#ff0000"/><rect x="122.22" y="19.84" width="9.8" height="4.0" fill="#5a0000"/><rect x="122.22" y="20.74" width="9.8" height="2.2" fill="#ff0000"/><rect x="122.22" y="23.85" width="9.8" height="4.0" fill="#5a0000"/><rect x="122.22" y="24.75" width="9.8" height="2.2" fill="#ff0000"/><rect x="122.22" y="27.86" width="9.8" height="4.0" fill="#5a0000"/><rect x="122.22" y="28.76" width="9.8" height="2.2" fill="#ff0000"/><rect x="122.22" y="31.87" width="9.8" height="4.0" fill="#5a5a00"/><rect x="122.22" y="32.77" width="9.8" height="2.2" fill="#ffff00"/><rect x="122.22" y="35.88" width="9.8" height="4.0" fill="#5a5a00"/><rect x="122.22" y="36.78" width="9.8" height="2.2" fill="#ffff00"/><rect x="122.22" y="39.89" width="9.8" height="4.0" fill="#5a5a00"/><rect x="122.22" y="40.79" width="9.8" height="2.2" fill="#ffff00"/><rect x="122.22" y="43.90" width="9.8" height="4.0" fill="#5a5a00"/><rect x="122.22" y="44.80" width="9.8" height="2.2" fill="#ffff00"/><rect x="122.22" y="47.91" width="9.8" height="4.0" fill="#5a5a00"/><rect x="122.22" y="48.81" width="9.8" height="2.2" fill="#ffff00"/><rect x="122.22" y="51.92" width="9.8" height="4.0" fill="#5a5a00"/><rect x="122.22" y="52.82" width="9.8" height="2.2" fill="#ffff00"/><rect x="122.22" y="55.93" width="9.8" height="4.0" fill="#5a5a00"/><rect x="122.22" y="56.83" width="9.8" height="2.2" fill="#ffff00"/><rect x="122.22" y="59.94" width="9.8" height="4.0" fill="#5a5a00"/><rect x="122.22" y="60.84" width="9.8" height="2.2" fill="#ffff00"/><rect x="122.22" y="63.95" width="9.8" height="4.0" fill="#5a5a00"/><rect x="122.22" y="64.85" width="9.8" height="2.2" fill="#ffff00"/><rect x="122.22" y="67.96" width="9.8" height="4.0" fill="#5a5a00"/><rect x="122.22" y="68.86" width="9.8" height="2.2" fill="#ffff00"/><rect x="122.22" y="71.97" width="9.8" height="4.0" fill="#5a5a00"/><rect x="122.22" y="72.87" width="9.8" height="2.2" fill="#ffff00"/><rect x="122.22" y="75.98" width="9.8" height="4.0" fill="#5a5a00"/><rect x="122.22" y="76.88" width="9.8" height="2.2" fill="#ffff00"/><rect x="122.22" y="79.99" width="9.8" height="4.0" fill="#005a00"/><rect x="122.22" y="80.89" width="9.8" height="2.2" fill="#00ff00"/><rect x="122.22" y="84.00" width="9.8" height="4.0" fill="#005a00"/><rect x="122.22" y="84.90" width="9.8" height="2.2" fill="#00ff00"/><rect x="122.22" y="88.01" width="9.8" height="4.0" fill="#005a00"/><rect x="122.22" y="88.91" width="9.8" height="2.2" fill="#00ff00"/><rect x="122.22" y="92.02" width="9.8" height="4.0" fill="#005a00"/><rect x="122.22" y="92.92" width="9.8" height="2.2" fill="#00ff00"/><rect x="122.22" y="96.03" width="9.8" height="4.0" fill="#005a00"/><rect x="122.22" y="96.93" width="9.8" height="2.2" fill="#00ff00"/><rect x="122.22" y="100.04" width="9.8" height="4.0" fill="#005a00"/><rect x="122.22" y="100.94" width="9.8" height="2.2" fill="#00ff00"/><rect x="122.22" y="104.05" width="9.8" height="4.0" fill="#005a00"/><rect x="122.22" y="104.95" width="9.8" height="2.2" fill="#00ff00"/><rect x="122.22" y="108.06" width="9.8" height="4.0" fill="#005a00"/><rect x="122.22" y="108.96" width="9.8" height="2.2" fill="#00ff00"/><rect x="122.22" y="112.07" width="9.8" height="4.0" fill="#005a00"/><rect x="122.22" y="112.97" width="9.8" height="2.2" fill="#00ff00"/><rect x="122.22" y="116.08" width="9.8" height="4.0" fill="#005a00"/><rect x="122.22" y="116.98" width="9.8" height="2.2" fill="#00ff00"/><rect x="122.22" y="120.09" width="9.8" height="4.0" fill="#005a00"/><rect x="122.22" y="120.99" width="9.8" height="2.2" fill="#00ff00"/><rect x="122.22" y="124.10" width="9.8" height="4.0" fill="#005a00"/><rect x="122.22" y="125.00" width="9.8" height="2.2" fill="#00ff00"/><rect x="122.22" y="128.11" width="9.8" height="4.0" fill="#005a00"/><rect x="122.22" y="129.01" width="9.8" height="2.2" fill="#00ff00"/><rect x="122.22" y="132.12" width="9.8" height="4.0" fill="#005a00"/><rect x="122.22" y="133.02" width="9.8" height="2.2" fill="#00ff00"/><rect x="122.22" y="136.13" width="9.8" height="4.0" fill="#005a00"/><rect x="122.22" y="137.03" width="9.8" height="2.2" fill="#00ff00"/><rect x="122.22" y="140.14" width="9.8" height="4.0" fill="#005a00"/><rect x="122.22" y="141.04" width="9.8" height="2.2" fill="#00ff00"/><rect x="122.22" y="144.15" width="9.8" height="4.0" fill="#005a00"/><rect x="122.22" y="145.05" width="9.8" height="2.2" fill="#00ff00"/><rect x="122.22" y="148.16" width="9.8" height="4.0" fill="#005a00"/><rect x="122.22" y="149.06" width="9.8" height="2.2" fill="#00ff00"/><rect x="122.22" y="152.17" width="9.8" height="4.0" fill="#005a00"/><rect x="122.22" y="153.07" width="9.8" height="2.2" fill="#00ff00"/><rect x="133.24" y="3.80" width="9.8" height="4.0" fill="#380000"/><rect x="133.24" y="4.70" width="9.8" height="2.2" fill="#8e0000"/><rect x="133.24" y="7.81" width="9.8" height="4.0" fill="#5a0000"/><rect x="133.24" y="8.71" width="9.8" height="2.2" fill="#ff0000"/><rect x="133.24" y="11.82" width="9.8" height="4.0" fill="#5a0000"/><rect x="133.24" y="12.72" width="9.8" height="2.2" fill="#ff0000"/><rect x="133.24" y="15.83" width="9.8" height="4.0" fill="#5a0000"/><rect x="133.24" y="16.73" width="9.8" height="2.2" fill="#ff0000"/><rect x="133.24" y="19.84" width="9.8" height="4.0" fill="#5a0000"/><rect x="133.24" y="20.74" width="9.8" height="2.2" fill="#ff0000"/><rect x="133.24" y="23.85" width="9.8" height="4.0" fill="#5a0000"/><rect x="133.24" y="24.75" width="9.8" height="2.2" fill="#ff0000"/><rect x="133.24" y="27.86" width="9.8" height="4.0" fill="#5a0000"/><rect x="133.24" y="28.76" width="9.8" height="2.2" fill="#ff0000"/><rect x="133.24" y="31.87" width="9.8" height="4.0" fill="#5a5a00"/><rect x="133.24" y="32.77" width="9.8" height="2.2" fill="#ffff00"/><rect x="133.24" y="35.88" width="9.8" height="4.0" fill="#5a5a00"/><rect x="133.24" y="36.78" width="9.8" height="2.2" fill="#ffff00"/><rect x="133.24" y="39.89" width="9.8" height="4.0" fill="#5a5a00"/><rect x="133.24" y="40.79" width="9.8" height="2.2" fill="#ffff00"/><rect x="133.24" y="43.90" width="9.8" height="4.0" fill="#5a5a00"/><rect x="133.24" y="44.80" width="9.8" height="2.2" fill="#ffff00"/><rect x="133.24" y="47.91" width="9.8" height="4.0" fill="#5a5a00"/><rect x="133.24" y="48.81" width="9.8" height="2.2" fill="#ffff00"/><rect x="133.24" y="51.92" width="9.8" height="4.0" fill="#5a5a00"/><rect x="133.24" y="52.82" width="9.8" height="2.2" fill="#ffff00"/><rect x="133.24" y="55.93" width="9.8" height="4.0" fill="#5a5a00"/><rect x="133.24" y="56.83" width="9.8" height="2.2" fill="#ffff00"/><rect x="133.24" y="59.94" width="9.8" height="4.0" fill="#5a5a00"/><rect x="133.24" y="60.84" width="9.8" height="2.2" fill="#ffff00"/><rect x="133.24" y="63.95" width="9.8" height="4.0" fill="#5a5a00"/><rect x="133.24" y="64.85" width="9.8" height="2.2" fill="#ffff00"/><rect x="133.24" y="67.96" width="9.8" height="4.0" fill="#5a5a00"/><rect x="133.24" y="68.86" width="9.8" height="2.2" fill="#ffff00"/><rect x="133.24" y="71.97" width="9.8" height="4.0" fill="#5a5a00"/><rect x="133.24" y="72.87" width="9.8" height="2.2" fill="#ffff00"/><rect x="133.24" y="75.98" width="9.8" height="4.0" fill="#5a5a00"/><rect x="133.24" y="76.88" width="9.8" height="2.2" fill="#ffff00"/><rect x="133.24" y="79.99" width="9.8" height="4.0" fill="#005a00"/><rect x="133.24" y="80.89" width="9.8" height="2.2" fill="#00ff00"/><rect x="133.24" y="84.00" width="9.8" height="4.0" fill="#005a00"/><rect x="133.24" y="84.90" width="9.8" height="2.2" fill="#00ff00"/><rect x="133.24" y="88.01" width="9.8" height="4.0" fill="#005a00"/><rect x="133.24" y="88.91" width="9.8" height="2.2" fill="#00ff00"/><rect x="133.24" y="92.02" width="9.8" height="4.0" fill="#005a00"/><rect x="133.24" y="92.92" width="9.8" height="2.2" fill="#00ff00"/><rect x="133.24" y="96.03" width="9.8" height="4.0" fill="#005a00"/><rect x="133.24" y="96.93" width="9.8" height="2.2" fill="#00ff00"/><rect x="133.24" y="100.04" width="9.8" height="4.0" fill="#005a00"/><rect x="133.24" y="100.94" width="9.8" height="2.2" fill="#00ff00"/><rect x="133.24" y="104.05" width="9.8" height="4.0" fill="#005a00"/><rect x="133.24" y="104.95" width="9.8" height="2.2" fill="#00ff00"/><rect x="133.24" y="108.06" width="9.8" height="4.0" fill="#005a00"/><rect x="133.24" y="108.96" width="9.8" height="2.2" fill="#00ff00"/><rect x="133.24" y="112.07" width="9.8" height="4.0" fill="#005a00"/><rect x="133.24" y="112.97" width="9.8" height="2.2" fill="#00ff00"/><rect x="133.24" y="116.08" width="9.8" height="4.0" fill="#005a00"/><rect x="133.24" y="116.98" width="9.8" height="2.2" fill="#00ff00"/><rect x="133.24" y="120.09" width="9.8" height="4.0" fill="#005a00"/><rect x="133.24" y="120.99" width="9.8" height="2.2" fill="#00ff00"/><rect x="133.24" y="124.10" width="9.8" height="4.0" fill="#005a00"/><rect x="133.24" y="125.00" width="9.8" height="2.2" fill="#00ff00"/><rect x="133.24" y="128.11" width="9.8" height="4.0" fill="#005a00"/><rect x="133.24" y="129.01" width="9.8" height="2.2" fill="#00ff00"/><rect x="133.24" y="132.12" width="9.8" height="4.0" fill="#005a00"/><rect x="133.24" y="133.02" width="9.8" height="2.2" fill="#00ff00"/><rect x="133.24" y="136.13" width="9.8" height="4.0" fill="#005a00"/><rect x="133.24" y="137.03" width="9.8" height="2.2" fill="#00ff00"/><rect x="133.24" y="140.14" width="9.8" height="4.0" fill="#005a00"/><rect x="133.24" y="141.04" width="9.8" height="2.2" fill="#00ff00"/><rect x="133.24" y="144.15" width="9.8" height="4.0" fill="#005a00"/><rect x="133.24" y="145.05" width="9.8" height="2.2" fill="#00ff00"/><rect x="133.24" y="148.16" width="9.8" height="4.0" fill="#005a00"/><rect x="133.24" y="149.06" width="9.8" height="2.2" fill="#00ff00"/><rect x="133.24" y="152.17" width="9.8" height="4.0" fill="#005a00"/><rect x="133.24" y="153.07" width="9.8" height="2.2" fill="#00ff00"/><rect x="144.26" y="3.80" width="9.8" height="4.0" fill="#380000"/><rect x="144.26" y="4.70" width="9.8" height="2.2" fill="#8e0000"/><rect x="144.26" y="7.81" width="9.8" height="4.0" fill="#5a0000"/><rect x="144.26" y="8.71" width="9.8" height="2.2" fill="#ff0000"/><rect x="144.26" y="11.82" width="9.8" height="4.0" fill="#5a0000"/><rect x="144.26" y="12.72" width="9.8" height="2.2" fill="#ff0000"/><rect x="144.26" y="15.83" width="9.8" height="4.0" fill="#5a0000"/><rect x="144.26" y="16.73" width="9.8" height="2.2" fill="#ff0000"/><rect x="144.26" y="19.84" width="9.8" height="4.0" fill="#5a0000"/><rect x="144.26" y="20.74" width="9.8" height="2.2" fill="#ff0000"/><rect x="144.26" y="23.85" width="9.8" height="4.0" fill="#5a0000"/><rect x="144.26" y="24.75" width="9.8" height="2.2" fill="#ff0000"/><rect x="144.26" y="27.86" width="9.8" height="4.0" fill="#5a0000"/><rect x="144.26" y="28.76" width="9.8" height="2.2" fill="#ff0000"/><rect x="144.26" y="31.87" width="9.8" height="4.0" fill="#5a5a00"/><rect x="144.26" y="32.77" width="9.8" height="2.2" fill="#ffff00"/><rect x="144.26" y="35.88" width="9.8" height="4.0" fill="#5a5a00"/><rect x="144.26" y="36.78" width="9.8" height="2.2" fill="#ffff00"/><rect x="144.26" y="39.89" width="9.8" height="4.0" fill="#5a5a00"/><rect x="144.26" y="40.79" width="9.8" height="2.2" fill="#ffff00"/><rect x="144.26" y="43.90" width="9.8" height="4.0" fill="#5a5a00"/><rect x="144.26" y="44.80" width="9.8" height="2.2" fill="#ffff00"/><rect x="144.26" y="47.91" width="9.8" height="4.0" fill="#5a5a00"/><rect x="144.26" y="48.81" width="9.8" height="2.2" fill="#ffff00"/><rect x="144.26" y="51.92" width="9.8" height="4.0" fill="#5a5a00"/><rect x="144.26" y="52.82" width="9.8" height="2.2" fill="#ffff00"/><rect x="144.26" y="55.93" width="9.8" height="4.0" fill="#5a5a00"/><rect x="144.26" y="56.83" width="9.8" height="2.2" fill="#ffff00"/><rect x="144.26" y="59.94" width="9.8" height="4.0" fill="#5a5a00"/><rect x="144.26" y="60.84" width="9.8" height="2.2" fill="#ffff00"/><rect x="144.26" y="63.95" width="9.8" height="4.0" fill="#5a5a00"/><rect x="144.26" y="64.85" width="9.8" height="2.2" fill="#ffff00"/><rect x="144.26" y="67.96" width="9.8" height="4.0" fill="#5a5a00"/><rect x="144.26" y="68.86" width="9.8" height="2.2" fill="#ffff00"/><rect x="144.26" y="71.97" width="9.8" height="4.0" fill="#5a5a00"/><rect x="144.26" y="72.87" width="9.8" height="2.2" fill="#ffff00"/><rect x="144.26" y="75.98" width="9.8" height="4.0" fill="#5a5a00"/><rect x="144.26" y="76.88" width="9.8" height="2.2" fill="#ffff00"/><rect x="144.26" y="79.99" width="9.8" height="4.0" fill="#005a00"/><rect x="144.26" y="80.89" width="9.8" height="2.2" fill="#00ff00"/><rect x="144.26" y="84.00" width="9.8" height="4.0" fill="#005a00"/><rect x="144.26" y="84.90" width="9.8" height="2.2" fill="#00ff00"/><rect x="144.26" y="88.01" width="9.8" height="4.0" fill="#005a00"/><rect x="144.26" y="88.91" width="9.8" height="2.2" fill="#00ff00"/><rect x="144.26" y="92.02" width="9.8" height="4.0" fill="#005a00"/><rect x="144.26" y="92.92" width="9.8" height="2.2" fill="#00ff00"/><rect x="144.26" y="96.03" width="9.8" height="4.0" fill="#005a00"/><rect x="144.26" y="96.93" width="9.8" height="2.2" fill="#00ff00"/><rect x="144.26" y="100.04" width="9.8" height="4.0" fill="#005a00"/><rect x="144.26" y="100.94" width="9.8" height="2.2" fill="#00ff00"/><rect x="144.26" y="104.05" width="9.8" height="4.0" fill="#005a00"/><rect x="144.26" y="104.95" width="9.8" height="2.2" fill="#00ff00"/><rect x="144.26" y="108.06" width="9.8" height="4.0" fill="#005a00"/><rect x="144.26" y="108.96" width="9.8" height="2.2" fill="#00ff00"/><rect x="144.26" y="112.07" width="9.8" height="4.0" fill="#005a00"/><rect x="144.26" y="112.97" width="9.8" height="2.2" fill="#00ff00"/><rect x="144.26" y="116.08" width="9.8" height="4.0" fill="#005a00"/><rect x="144.26" y="116.98" width="9.8" height="2.2" fill="#00ff00"/><rect x="144.26" y="120.09" width="9.8" height="4.0" fill="#005a00"/><rect x="144.26" y="120.99" width="9.8" height="2.2" fill="#00ff00"/><rect x="144.26" y="124.10" width="9.8" height="4.0" fill="#005a00"/><rect x="144.26" y="125.00" width="9.8" height="2.2" fill="#00ff00"/><rect x="144.26" y="128.11" width="9.8" height="4.0" fill="#005a00"/><rect x="144.26" y="129.01" width="9.8" height="2.2" fill="#00ff00"/><rect x="144.26" y="132.12" width="9.8" height="4.0" fill="#005a00"/><rect x="144.26" y="133.02" width="9.8" height="2.2" fill="#00ff00"/><rect x="144.26" y="136.13" width="9.8" height="4.0" fill="#005a00"/><rect x="144.26" y="137.03" width="9.8" height="2.2" fill="#00ff00"/><rect x="144.26" y="140.14" width="9.8" height="4.0" fill="#005a00"/><rect x="144.26" y="141.04" width="9.8" height="2.2" fill="#00ff00"/><rect x="144.26" y="144.15" width="9.8" height="4.0" fill="#005a00"/><rect x="144.26" y="145.05" width="9.8" height="2.2" fill="#00ff00"/><rect x="144.26" y="148.16" width="9.8" height="4.0" fill="#005a00"/><rect x="144.26" y="149.06" width="9.8" height="2.2" fill="#00ff00"/><rect x="144.26" y="152.17" width="9.8" height="4.0" fill="#005a00"/><rect x="144.26" y="153.07" width="9.8" height="2.2" fill="#00ff00"/><rect x="155.28" y="3.80" width="9.8" height="4.0" fill="#380000"/><rect x="155.28" y="4.70" width="9.8" height="2.2" fill="#8e0000"/><rect x="155.28" y="7.81" width="9.8" height="4.0" fill="#380000"/><rect x="155.28" y="8.71" width="9.8" height="2.2" fill="#8e0000"/><rect x="155.28" y="11.82" width="9.8" height="4.0" fill="#380000"/><rect x="155.28" y="12.72" width="9.8" height="2.2" fill="#8e0000"/><rect x="155.28" y="15.83" width="9.8" height="4.0" fill="#5a0000"/><rect x="155.28" y="16.73" width="9.8" height="2.2" fill="#ff0000"/><rect x="155.28" y="19.84" width="9.8" height="4.0" fill="#380000"/><rect x="155.28" y="20.74" width="9.8" height="2.2" fill="#8e0000"/><rect x="155.28" y="23.85" width="9.8" height="4.0" fill="#380000"/><rect x="155.28" y="24.75" width="9.8" height="2.2" fill="#8e0000"/><rect x="155.28" y="27.86" width="9.8" height="4.0" fill="#380000"/><rect x="155.28" y="28.76" width="9.8" height="2.2" fill="#8e0000"/><rect x="155.28" y="31.87" width="9.8" height="4.0" fill="#363400"/><rect x="155.28" y="32.77" width="9.8" height="2.2" fill="#9a9500"/><rect x="155.28" y="35.88" width="9.8" height="4.0" fill="#363400"/><rect x="155.28" y="36.78" width="9.8" height="2.2" fill="#9a9500"/><rect x="155.28" y="39.89" width="9.8" height="4.0" fill="#363400"/><rect x="155.28" y="40.79" width="9.8" height="2.2" fill="#9a9500"/><rect x="155.28" y="43.90" width="9.8" height="4.0" fill="#363400"/><rect x="155.28" y="44.80" width="9.8" height="2.2" fill="#9a9500"/><rect x="155.28" y="47.91" width="9.8" height="4.0" fill="#363400"/><rect x="155.28" y="48.81" width="9.8" height="2.2" fill="#9a9500"/><rect x="155.28" y="51.92" width="9.8" height="4.0" fill="#5a5a00"/><rect x="155.28" y="52.82" width="9.8" height="2.2" fill="#ffff00"/><rect x="155.28" y="55.93" width="9.8" height="4.0" fill="#5a5a00"/><rect x="155.28" y="56.83" width="9.8" height="2.2" fill="#ffff00"/><rect x="155.28" y="59.94" width="9.8" height="4.0" fill="#5a5a00"/><rect x="155.28" y="60.84" width="9.8" height="2.2" fill="#ffff00"/><rect x="155.28" y="63.95" width="9.8" height="4.0" fill="#5a5a00"/><rect x="155.28" y="64.85" width="9.8" height="2.2" fill="#ffff00"/><rect x="155.28" y="67.96" width="9.8" height="4.0" fill="#5a5a00"/><rect x="155.28" y="68.86" width="9.8" height="2.2" fill="#ffff00"/><rect x="155.28" y="71.97" width="9.8" height="4.0" fill="#5a5a00"/><rect x="155.28" y="72.87" width="9.8" height="2.2" fill="#ffff00"/><rect x="155.28" y="75.98" width="9.8" height="4.0" fill="#5a5a00"/><rect x="155.28" y="76.88" width="9.8" height="2.2" fill="#ffff00"/><rect x="155.28" y="79.99" width="9.8" height="4.0" fill="#005a00"/><rect x="155.28" y="80.89" width="9.8" height="2.2" fill="#00ff00"/><rect x="155.28" y="84.00" width="9.8" height="4.0" fill="#005a00"/><rect x="155.28" y="84.90" width="9.8" height="2.2" fill="#00ff00"/><rect x="155.28" y="88.01" width="9.8" height="4.0" fill="#005a00"/><rect x="155.28" y="88.91" width="9.8" height="2.2" fill="#00ff00"/><rect x="155.28" y="92.02" width="9.8" height="4.0" fill="#005a00"/><rect x="155.28" y="92.92" width="9.8" height="2.2" fill="#00ff00"/><rect x="155.28" y="96.03" width="9.8" height="4.0" fill="#005a00"/><rect x="155.28" y="96.93" width="9.8" height="2.2" fill="#00ff00"/><rect x="155.28" y="100.04" width="9.8" height="4.0" fill="#005a00"/><rect x="155.28" y="100.94" width="9.8" height="2.2" fill="#00ff00"/><rect x="155.28" y="104.05" width="9.8" height="4.0" fill="#005a00"/><rect x="155.28" y="104.95" width="9.8" height="2.2" fill="#00ff00"/><rect x="155.28" y="108.06" width="9.8" height="4.0" fill="#005a00"/><rect x="155.28" y="108.96" width="9.8" height="2.2" fill="#00ff00"/><rect x="155.28" y="112.07" width="9.8" height="4.0" fill="#005a00"/><rect x="155.28" y="112.97" width="9.8" height="2.2" fill="#00ff00"/><rect x="155.28" y="116.08" width="9.8" height="4.0" fill="#005a00"/><rect x="155.28" y="116.98" width="9.8" height="2.2" fill="#00ff00"/><rect x="155.28" y="120.09" width="9.8" height="4.0" fill="#005a00"/><rect x="155.28" y="120.99" width="9.8" height="2.2" fill="#00ff00"/><rect x="155.28" y="124.10" width="9.8" height="4.0" fill="#005a00"/><rect x="155.28" y="125.00" width="9.8" height="2.2" fill="#00ff00"/><rect x="155.28" y="128.11" width="9.8" height="4.0" fill="#005a00"/><rect x="155.28" y="129.01" width="9.8" height="2.2" fill="#00ff00"/><rect x="155.28" y="132.12" width="9.8" height="4.0" fill="#005a00"/><rect x="155.28" y="133.02" width="9.8" height="2.2" fill="#00ff00"/><rect x="155.28" y="136.13" width="9.8" height="4.0" fill="#005a00"/><rect x="155.28" y="137.03" width="9.8" height="2.2" fill="#00ff00"/><rect x="155.28" y="140.14" width="9.8" height="4.0" fill="#005a00"/><rect x="155.28" y="141.04" width="9.8" height="2.2" fill="#00ff00"/><rect x="155.28" y="144.15" width="9.8" height="4.0" fill="#005a00"/><rect x="155.28" y="145.05" width="9.8" height="2.2" fill="#00ff00"/><rect x="155.28" y="148.16" width="9.8" height="4.0" fill="#005a00"/><rect x="155.28" y="149.06" width="9.8" height="2.2" fill="#00ff00"/><rect x="155.28" y="152.17" width="9.8" height="4.0" fill="#005a00"/><rect x="155.28" y="153.07" width="9.8" height="2.2" fill="#00ff00"/><rect x="166.30" y="3.80" width="9.8" height="4.0" fill="#380000"/><rect x="166.30" y="4.70" width="9.8" height="2.2" fill="#8e0000"/><rect x="166.30" y="7.81" width="9.8" height="4.0" fill="#380000"/><rect x="166.30" y="8.71" width="9.8" height="2.2" fill="#8e0000"/><rect x="166.30" y="11.82" width="9.8" height="4.0" fill="#380000"/><rect x="166.30" y="12.72" width="9.8" height="2.2" fill="#8e0000"/><rect x="166.30" y="15.83" width="9.8" height="4.0" fill="#5a0000"/><rect x="166.30" y="16.73" width="9.8" height="2.2" fill="#ff0000"/><rect x="166.30" y="19.84" width="9.8" height="4.0" fill="#380000"/><rect x="166.30" y="20.74" width="9.8" height="2.2" fill="#8e0000"/><rect x="166.30" y="23.85" width="9.8" height="4.0" fill="#380000"/><rect x="166.30" y="24.75" width="9.8" height="2.2" fill="#8e0000"/><rect x="166.30" y="27.86" width="9.8" height="4.0" fill="#380000"/><rect x="166.30" y="28.76" width="9.8" height="2.2" fill="#8e0000"/><rect x="166.30" y="31.87" width="9.8" height="4.0" fill="#363400"/><rect x="166.30" y="32.77" width="9.8" height="2.2" fill="#9a9500"/><rect x="166.30" y="35.88" width="9.8" height="4.0" fill="#363400"/><rect x="166.30" y="36.78" width="9.8" height="2.2" fill="#9a9500"/><rect x="166.30" y="39.89" width="9.8" height="4.0" fill="#363400"/><rect x="166.30" y="40.79" width="9.8" height="2.2" fill="#9a9500"/><rect x="166.30" y="43.90" width="9.8" height="4.0" fill="#363400"/><rect x="166.30" y="44.80" width="9.8" height="2.2" fill="#9a9500"/><rect x="166.30" y="47.91" width="9.8" height="4.0" fill="#363400"/><rect x="166.30" y="48.81" width="9.8" height="2.2" fill="#9a9500"/><rect x="166.30" y="51.92" width="9.8" height="4.0" fill="#5a5a00"/><rect x="166.30" y="52.82" width="9.8" height="2.2" fill="#ffff00"/><rect x="166.30" y="55.93" width="9.8" height="4.0" fill="#5a5a00"/><rect x="166.30" y="56.83" width="9.8" height="2.2" fill="#ffff00"/><rect x="166.30" y="59.94" width="9.8" height="4.0" fill="#5a5a00"/><rect x="166.30" y="60.84" width="9.8" height="2.2" fill="#ffff00"/><rect x="166.30" y="63.95" width="9.8" height="4.0" fill="#5a5a00"/><rect x="166.30" y="64.85" width="9.8" height="2.2" fill="#ffff00"/><rect x="166.30" y="67.96" width="9.8" height="4.0" fill="#5a5a00"/><rect x="166.30" y="68.86" width="9.8" height="2.2" fill="#ffff00"/><rect x="166.30" y="71.97" width="9.8" height="4.0" fill="#5a5a00"/><rect x="166.30" y="72.87" width="9.8" height="2.2" fill="#ffff00"/><rect x="166.30" y="75.98" width="9.8" height="4.0" fill="#5a5a00"/><rect x="166.30" y="76.88" width="9.8" height="2.2" fill="#ffff00"/><rect x="166.30" y="79.99" width="9.8" height="4.0" fill="#005a00"/><rect x="166.30" y="80.89" width="9.8" height="2.2" fill="#00ff00"/><rect x="166.30" y="84.00" width="9.8" height="4.0" fill="#005a00"/><rect x="166.30" y="84.90" width="9.8" height="2.2" fill="#00ff00"/><rect x="166.30" y="88.01" width="9.8" height="4.0" fill="#005a00"/><rect x="166.30" y="88.91" width="9.8" height="2.2" fill="#00ff00"/><rect x="166.30" y="92.02" width="9.8" height="4.0" fill="#005a00"/><rect x="166.30" y="92.92" width="9.8" height="2.2" fill="#00ff00"/><rect x="166.30" y="96.03" width="9.8" height="4.0" fill="#005a00"/><rect x="166.30" y="96.93" width="9.8" height="2.2" fill="#00ff00"/><rect x="166.30" y="100.04" width="9.8" height="4.0" fill="#005a00"/><rect x="166.30" y="100.94" width="9.8" height="2.2" fill="#00ff00"/><rect x="166.30" y="104.05" width="9.8" height="4.0" fill="#005a00"/><rect x="166.30" y="104.95" width="9.8" height="2.2" fill="#00ff00"/><rect x="166.30" y="108.06" width="9.8" height="4.0" fill="#005a00"/><rect x="166.30" y="108.96" width="9.8" height="2.2" fill="#00ff00"/><rect x="166.30" y="112.07" width="9.8" height="4.0" fill="#005a00"/><rect x="166.30" y="112.97" width="9.8" height="2.2" fill="#00ff00"/><rect x="166.30" y="116.08" width="9.8" height="4.0" fill="#005a00"/><rect x="166.30" y="116.98" width="9.8" height="2.2" fill="#00ff00"/><rect x="166.30" y="120.09" width="9.8" height="4.0" fill="#005a00"/><rect x="166.30" y="120.99" width="9.8" height="2.2" fill="#00ff00"/><rect x="166.30" y="124.10" width="9.8" height="4.0" fill="#005a00"/><rect x="166.30" y="125.00" width="9.8" height="2.2" fill="#00ff00"/><rect x="166.30" y="128.11" width="9.8" height="4.0" fill="#005a00"/><rect x="166.30" y="129.01" width="9.8" height="2.2" fill="#00ff00"/><rect x="166.30" y="132.12" width="9.8" height="4.0" fill="#005a00"/><rect x="166.30" y="133.02" width="9.8" height="2.2" fill="#00ff00"/><rect x="166.30" y="136.13" width="9.8" height="4.0" fill="#005a00"/><rect x="166.30" y="137.03" width="9.8" height="2.2" fill="#00ff00"/><rect x="166.30" y="140.14" width="9.8" height="4.0" fill="#005a00"/><rect x="166.30" y="141.04" width="9.8" height="2.2" fill="#00ff00"/><rect x="166.30" y="144.15" width="9.8" height="4.0" fill="#005a00"/><rect x="166.30" y="145.05" width="9.8" height="2.2" fill="#00ff00"/><rect x="166.30" y="148.16" width="9.8" height="4.0" fill="#005a00"/><rect x="166.30" y="149.06" width="9.8" height="2.2" fill="#00ff00"/><rect x="166.30" y="152.17" width="9.8" height="4.0" fill="#005a00"/><rect x="166.30" y="153.07" width="9.8" height="2.2" fill="#00ff00"/><rect x="177.32" y="3.80" width="9.8" height="4.0" fill="#380000"/><rect x="177.32" y="4.70" width="9.8" height="2.2" fill="#8e0000"/><rect x="177.32" y="7.81" width="9.8" height="4.0" fill="#380000"/><rect x="177.32" y="8.71" width="9.8" height="2.2" fill="#8e0000"/><rect x="177.32" y="11.82" width="9.8" height="4.0" fill="#380000"/><rect x="177.32" y="12.72" width="9.8" height="2.2" fill="#8e0000"/><rect x="177.32" y="15.83" width="9.8" height="4.0" fill="#5a0000"/><rect x="177.32" y="16.73" width="9.8" height="2.2" fill="#ff0000"/><rect x="177.32" y="19.84" width="9.8" height="4.0" fill="#380000"/><rect x="177.32" y="20.74" width="9.8" height="2.2" fill="#8e0000"/><rect x="177.32" y="23.85" width="9.8" height="4.0" fill="#380000"/><rect x="177.32" y="24.75" width="9.8" height="2.2" fill="#8e0000"/><rect x="177.32" y="27.86" width="9.8" height="4.0" fill="#380000"/><rect x="177.32" y="28.76" width="9.8" height="2.2" fill="#8e0000"/><rect x="177.32" y="31.87" width="9.8" height="4.0" fill="#363400"/><rect x="177.32" y="32.77" width="9.8" height="2.2" fill="#9a9500"/><rect x="177.32" y="35.88" width="9.8" height="4.0" fill="#363400"/><rect x="177.32" y="36.78" width="9.8" height="2.2" fill="#9a9500"/><rect x="177.32" y="39.89" width="9.8" height="4.0" fill="#363400"/><rect x="177.32" y="40.79" width="9.8" height="2.2" fill="#9a9500"/><rect x="177.32" y="43.90" width="9.8" height="4.0" fill="#363400"/><rect x="177.32" y="44.80" width="9.8" height="2.2" fill="#9a9500"/><rect x="177.32" y="47.91" width="9.8" height="4.0" fill="#363400"/><rect x="177.32" y="48.81" width="9.8" height="2.2" fill="#9a9500"/><rect x="177.32" y="51.92" width="9.8" height="4.0" fill="#363400"/><rect x="177.32" y="52.82" width="9.8" height="2.2" fill="#9a9500"/><rect x="177.32" y="55.93" width="9.8" height="4.0" fill="#363400"/><rect x="177.32" y="56.83" width="9.8" height="2.2" fill="#9a9500"/><rect x="177.32" y="59.94" width="9.8" height="4.0" fill="#363400"/><rect x="177.32" y="60.84" width="9.8" height="2.2" fill="#9a9500"/><rect x="177.32" y="63.95" width="9.8" height="4.0" fill="#363400"/><rect x="177.32" y="64.85" width="9.8" height="2.2" fill="#9a9500"/><rect x="177.32" y="67.96" width="9.8" height="4.0" fill="#363400"/><rect x="177.32" y="68.86" width="9.8" height="2.2" fill="#9a9500"/><rect x="177.32" y="71.97" width="9.8" height="4.0" fill="#363400"/><rect x="177.32" y="72.87" width="9.8" height="2.2" fill="#9a9500"/><rect x="177.32" y="75.98" width="9.8" height="4.0" fill="#363400"/><rect x="177.32" y="76.88" width="9.8" height="2.2" fill="#9a9500"/><rect x="177.32" y="79.99" width="9.8" height="4.0" fill="#0a3a40"/><rect x="177.32" y="80.89" width="9.8" height="2.2" fill="#1a9cb0"/><rect x="177.32" y="84.00" width="9.8" height="4.0" fill="#0a3a40"/><rect x="177.32" y="84.90" width="9.8" height="2.2" fill="#1a9cb0"/><rect x="177.32" y="88.01" width="9.8" height="4.0" fill="#0a3a40"/><rect x="177.32" y="88.91" width="9.8" height="2.2" fill="#1a9cb0"/><rect x="177.32" y="92.02" width="9.8" height="4.0" fill="#0a3a40"/><rect x="177.32" y="92.92" width="9.8" height="2.2" fill="#1a9cb0"/><rect x="177.32" y="96.03" width="9.8" height="4.0" fill="#0a3a40"/><rect x="177.32" y="96.93" width="9.8" height="2.2" fill="#1a9cb0"/><rect x="177.32" y="100.04" width="9.8" height="4.0" fill="#0a3a40"/><rect x="177.32" y="100.94" width="9.8" height="2.2" fill="#1a9cb0"/><rect x="177.32" y="104.05" width="9.8" height="4.0" fill="#0a3a40"/><rect x="177.32" y="104.95" width="9.8" height="2.2" fill="#1a9cb0"/><rect x="177.32" y="108.06" width="9.8" height="4.0" fill="#0a3a40"/><rect x="177.32" y="108.96" width="9.8" height="2.2" fill="#1a9cb0"/><rect x="177.32" y="112.07" width="9.8" height="4.0" fill="#0a3a40"/><rect x="177.32" y="112.97" width="9.8" height="2.2" fill="#1a9cb0"/><rect x="177.32" y="116.08" width="9.8" height="4.0" fill="#0a3a40"/><rect x="177.32" y="116.98" width="9.8" height="2.2" fill="#1a9cb0"/><rect x="177.32" y="120.09" width="9.8" height="4.0" fill="#0a3a40"/><rect x="177.32" y="120.99" width="9.8" height="2.2" fill="#1a9cb0"/><rect x="177.32" y="124.10" width="9.8" height="4.0" fill="#0a3a40"/><rect x="177.32" y="125.00" width="9.8" height="2.2" fill="#1a9cb0"/><rect x="177.32" y="128.11" width="9.8" height="4.0" fill="#0a3a40"/><rect x="177.32" y="129.01" width="9.8" height="2.2" fill="#1a9cb0"/><rect x="177.32" y="132.12" width="9.8" height="4.0" fill="#0a3a40"/><rect x="177.32" y="133.02" width="9.8" height="2.2" fill="#1a9cb0"/><rect x="177.32" y="136.13" width="9.8" height="4.0" fill="#0a3a40"/><rect x="177.32" y="137.03" width="9.8" height="2.2" fill="#1a9cb0"/><rect x="177.32" y="140.14" width="9.8" height="4.0" fill="#0a3a40"/><rect x="177.32" y="141.04" width="9.8" height="2.2" fill="#1a9cb0"/><rect x="177.32" y="144.15" width="9.8" height="4.0" fill="#0a3a40"/><rect x="177.32" y="145.05" width="9.8" height="2.2" fill="#1a9cb0"/><rect x="177.32" y="148.16" width="9.8" height="4.0" fill="#0a3a40"/><rect x="177.32" y="149.06" width="9.8" height="2.2" fill="#1a9cb0"/><rect x="177.32" y="152.17" width="9.8" height="4.0" fill="#0a3a40"/><rect x="177.32" y="153.07" width="9.8" height="2.2" fill="#1a9cb0"/><rect x="188.34" y="3.80" width="9.8" height="4.0" fill="#380000"/><rect x="188.34" y="4.70" width="9.8" height="2.2" fill="#8e0000"/><rect x="188.34" y="7.81" width="9.8" height="4.0" fill="#380000"/><rect x="188.34" y="8.71" width="9.8" height="2.2" fill="#8e0000"/><rect x="188.34" y="11.82" width="9.8" height="4.0" fill="#380000"/><rect x="188.34" y="12.72" width="9.8" height="2.2" fill="#8e0000"/><rect x="188.34" y="15.83" width="9.8" height="4.0" fill="#5a0000"/><rect x="188.34" y="16.73" width="9.8" height="2.2" fill="#ff0000"/><rect x="188.34" y="19.84" width="9.8" height="4.0" fill="#380000"/><rect x="188.34" y="20.74" width="9.8" height="2.2" fill="#8e0000"/><rect x="188.34" y="23.85" width="9.8" height="4.0" fill="#380000"/><rect x="188.34" y="24.75" width="9.8" height="2.2" fill="#8e0000"/><rect x="188.34" y="27.86" width="9.8" height="4.0" fill="#380000"/><rect x="188.34" y="28.76" width="9.8" height="2.2" fill="#8e0000"/><rect x="188.34" y="31.87" width="9.8" height="4.0" fill="#363400"/><rect x="188.34" y="32.77" width="9.8" height="2.2" fill="#9a9500"/><rect x="188.34" y="35.88" width="9.8" height="4.0" fill="#363400"/><rect x="188.34" y="36.78" width="9.8" height="2.2" fill="#9a9500"/><rect x="188.34" y="39.89" width="9.8" height="4.0" fill="#363400"/><rect x="188.34" y="40.79" width="9.8" height="2.2" fill="#9a9500"/><rect x="188.34" y="43.90" width="9.8" height="4.0" fill="#363400"/><rect x="188.34" y="44.80" width="9.8" height="2.2" fill="#9a9500"/><rect x="188.34" y="47.91" width="9.8" height="4.0" fill="#363400"/><rect x="188.34" y="48.81" width="9.8" height="2.2" fill="#9a9500"/><rect x="188.34" y="51.92" width="9.8" height="4.0" fill="#363400"/><rect x="188.34" y="52.82" width="9.8" height="2.2" fill="#9a9500"/><rect x="188.34" y="55.93" width="9.8" height="4.0" fill="#5a5a00"/><rect x="188.34" y="56.83" width="9.8" height="2.2" fill="#ffff00"/><rect x="188.34" y="59.94" width="9.8" height="4.0" fill="#5a5a00"/><rect x="188.34" y="60.84" width="9.8" height="2.2" fill="#ffff00"/><rect x="188.34" y="63.95" width="9.8" height="4.0" fill="#5a5a00"/><rect x="188.34" y="64.85" width="9.8" height="2.2" fill="#ffff00"/><rect x="188.34" y="67.96" width="9.8" height="4.0" fill="#5a5a00"/><rect x="188.34" y="68.86" width="9.8" height="2.2" fill="#ffff00"/><rect x="188.34" y="71.97" width="9.8" height="4.0" fill="#5a5a00"/><rect x="188.34" y="72.87" width="9.8" height="2.2" fill="#ffff00"/><rect x="188.34" y="75.98" width="9.8" height="4.0" fill="#5a5a00"/><rect x="188.34" y="76.88" width="9.8" height="2.2" fill="#ffff00"/><rect x="188.34" y="79.99" width="9.8" height="4.0" fill="#005a00"/><rect x="188.34" y="80.89" width="9.8" height="2.2" fill="#00ff00"/><rect x="188.34" y="84.00" width="9.8" height="4.0" fill="#005a00"/><rect x="188.34" y="84.90" width="9.8" height="2.2" fill="#00ff00"/><rect x="188.34" y="88.01" width="9.8" height="4.0" fill="#005a00"/><rect x="188.34" y="88.91" width="9.8" height="2.2" fill="#00ff00"/><rect x="188.34" y="92.02" width="9.8" height="4.0" fill="#005a00"/><rect x="188.34" y="92.92" width="9.8" height="2.2" fill="#00ff00"/><rect x="188.34" y="96.03" width="9.8" height="4.0" fill="#005a00"/><rect x="188.34" y="96.93" width="9.8" height="2.2" fill="#00ff00"/><rect x="188.34" y="100.04" width="9.8" height="4.0" fill="#005a00"/><rect x="188.34" y="100.94" width="9.8" height="2.2" fill="#00ff00"/><rect x="188.34" y="104.05" width="9.8" height="4.0" fill="#005a00"/><rect x="188.34" y="104.95" width="9.8" height="2.2" fill="#00ff00"/><rect x="188.34" y="108.06" width="9.8" height="4.0" fill="#005a00"/><rect x="188.34" y="108.96" width="9.8" height="2.2" fill="#00ff00"/><rect x="188.34" y="112.07" width="9.8" height="4.0" fill="#005a00"/><rect x="188.34" y="112.97" width="9.8" height="2.2" fill="#00ff00"/><rect x="188.34" y="116.08" width="9.8" height="4.0" fill="#005a00"/><rect x="188.34" y="116.98" width="9.8" height="2.2" fill="#00ff00"/><rect x="188.34" y="120.09" width="9.8" height="4.0" fill="#005a00"/><rect x="188.34" y="120.99" width="9.8" height="2.2" fill="#00ff00"/><rect x="188.34" y="124.10" width="9.8" height="4.0" fill="#005a00"/><rect x="188.34" y="125.00" width="9.8" height="2.2" fill="#00ff00"/><rect x="188.34" y="128.11" width="9.8" height="4.0" fill="#005a00"/><rect x="188.34" y="129.01" width="9.8" height="2.2" fill="#00ff00"/><rect x="188.34" y="132.12" width="9.8" height="4.0" fill="#005a00"/><rect x="188.34" y="133.02" width="9.8" height="2.2" fill="#00ff00"/><rect x="188.34" y="136.13" width="9.8" height="4.0" fill="#005a00"/><rect x="188.34" y="137.03" width="9.8" height="2.2" fill="#00ff00"/><rect x="188.34" y="140.14" width="9.8" height="4.0" fill="#005a00"/><rect x="188.34" y="141.04" width="9.8" height="2.2" fill="#00ff00"/><rect x="188.34" y="144.15" width="9.8" height="4.0" fill="#005a00"/><rect x="188.34" y="145.05" width="9.8" height="2.2" fill="#00ff00"/><rect x="188.34" y="148.16" width="9.8" height="4.0" fill="#005a00"/><rect x="188.34" y="149.06" width="9.8" height="2.2" fill="#00ff00"/><rect x="188.34" y="152.17" width="9.8" height="4.0" fill="#005a00"/><rect x="188.34" y="153.07" width="9.8" height="2.2" fill="#00ff00"/><rect x="199.36" y="3.80" width="9.8" height="4.0" fill="#380000"/><rect x="199.36" y="4.70" width="9.8" height="2.2" fill="#8e0000"/><rect x="199.36" y="7.81" width="9.8" height="4.0" fill="#5a0000"/><rect x="199.36" y="8.71" width="9.8" height="2.2" fill="#ff0000"/><rect x="199.36" y="11.82" width="9.8" height="4.0" fill="#5a0000"/><rect x="199.36" y="12.72" width="9.8" height="2.2" fill="#ff0000"/><rect x="199.36" y="15.83" width="9.8" height="4.0" fill="#5a0000"/><rect x="199.36" y="16.73" width="9.8" height="2.2" fill="#ff0000"/><rect x="199.36" y="19.84" width="9.8" height="4.0" fill="#5a0000"/><rect x="199.36" y="20.74" width="9.8" height="2.2" fill="#ff0000"/><rect x="199.36" y="23.85" width="9.8" height="4.0" fill="#5a0000"/><rect x="199.36" y="24.75" width="9.8" height="2.2" fill="#ff0000"/><rect x="199.36" y="27.86" width="9.8" height="4.0" fill="#5a0000"/><rect x="199.36" y="28.76" width="9.8" height="2.2" fill="#ff0000"/><rect x="199.36" y="31.87" width="9.8" height="4.0" fill="#5a5a00"/><rect x="199.36" y="32.77" width="9.8" height="2.2" fill="#ffff00"/><rect x="199.36" y="35.88" width="9.8" height="4.0" fill="#5a5a00"/><rect x="199.36" y="36.78" width="9.8" height="2.2" fill="#ffff00"/><rect x="199.36" y="39.89" width="9.8" height="4.0" fill="#5a5a00"/><rect x="199.36" y="40.79" width="9.8" height="2.2" fill="#ffff00"/><rect x="199.36" y="43.90" width="9.8" height="4.0" fill="#5a5a00"/><rect x="199.36" y="44.80" width="9.8" height="2.2" fill="#ffff00"/><rect x="199.36" y="47.91" width="9.8" height="4.0" fill="#5a5a00"/><rect x="199.36" y="48.81" width="9.8" height="2.2" fill="#ffff00"/><rect x="199.36" y="51.92" width="9.8" height="4.0" fill="#5a5a00"/><rect x="199.36" y="52.82" width="9.8" height="2.2" fill="#ffff00"/><rect x="199.36" y="55.93" width="9.8" height="4.0" fill="#5a5a00"/><rect x="199.36" y="56.83" width="9.8" height="2.2" fill="#ffff00"/><rect x="199.36" y="59.94" width="9.8" height="4.0" fill="#5a5a00"/><rect x="199.36" y="60.84" width="9.8" height="2.2" fill="#ffff00"/><rect x="199.36" y="63.95" width="9.8" height="4.0" fill="#5a5a00"/><rect x="199.36" y="64.85" width="9.8" height="2.2" fill="#ffff00"/><rect x="199.36" y="67.96" width="9.8" height="4.0" fill="#5a5a00"/><rect x="199.36" y="68.86" width="9.8" height="2.2" fill="#ffff00"/><rect x="199.36" y="71.97" width="9.8" height="4.0" fill="#5a5a00"/><rect x="199.36" y="72.87" width="9.8" height="2.2" fill="#ffff00"/><rect x="199.36" y="75.98" width="9.8" height="4.0" fill="#5a5a00"/><rect x="199.36" y="76.88" width="9.8" height="2.2" fill="#ffff00"/><rect x="199.36" y="79.99" width="9.8" height="4.0" fill="#005a00"/><rect x="199.36" y="80.89" width="9.8" height="2.2" fill="#00ff00"/><rect x="199.36" y="84.00" width="9.8" height="4.0" fill="#005a00"/><rect x="199.36" y="84.90" width="9.8" height="2.2" fill="#00ff00"/><rect x="199.36" y="88.01" width="9.8" height="4.0" fill="#005a00"/><rect x="199.36" y="88.91" width="9.8" height="2.2" fill="#00ff00"/><rect x="199.36" y="92.02" width="9.8" height="4.0" fill="#005a00"/><rect x="199.36" y="92.92" width="9.8" height="2.2" fill="#00ff00"/><rect x="199.36" y="96.03" width="9.8" height="4.0" fill="#005a00"/><rect x="199.36" y="96.93" width="9.8" height="2.2" fill="#00ff00"/><rect x="199.36" y="100.04" width="9.8" height="4.0" fill="#005a00"/><rect x="199.36" y="100.94" width="9.8" height="2.2" fill="#00ff00"/><rect x="199.36" y="104.05" width="9.8" height="4.0" fill="#005a00"/><rect x="199.36" y="104.95" width="9.8" height="2.2" fill="#00ff00"/><rect x="199.36" y="108.06" width="9.8" height="4.0" fill="#005a00"/><rect x="199.36" y="108.96" width="9.8" height="2.2" fill="#00ff00"/><rect x="199.36" y="112.07" width="9.8" height="4.0" fill="#005a00"/><rect x="199.36" y="112.97" width="9.8" height="2.2" fill="#00ff00"/><rect x="199.36" y="116.08" width="9.8" height="4.0" fill="#005a00"/><rect x="199.36" y="116.98" width="9.8" height="2.2" fill="#00ff00"/><rect x="199.36" y="120.09" width="9.8" height="4.0" fill="#005a00"/><rect x="199.36" y="120.99" width="9.8" height="2.2" fill="#00ff00"/><rect x="199.36" y="124.10" width="9.8" height="4.0" fill="#005a00"/><rect x="199.36" y="125.00" width="9.8" height="2.2" fill="#00ff00"/><rect x="199.36" y="128.11" width="9.8" height="4.0" fill="#005a00"/><rect x="199.36" y="129.01" width="9.8" height="2.2" fill="#00ff00"/><rect x="199.36" y="132.12" width="9.8" height="4.0" fill="#005a00"/><rect x="199.36" y="133.02" width="9.8" height="2.2" fill="#00ff00"/><rect x="199.36" y="136.13" width="9.8" height="4.0" fill="#005a00"/><rect x="199.36" y="137.03" width="9.8" height="2.2" fill="#00ff00"/><rect x="199.36" y="140.14" width="9.8" height="4.0" fill="#005a00"/><rect x="199.36" y="141.04" width="9.8" height="2.2" fill="#00ff00"/><rect x="199.36" y="144.15" width="9.8" height="4.0" fill="#005a00"/><rect x="199.36" y="145.05" width="9.8" height="2.2" fill="#00ff00"/><rect x="199.36" y="148.16" width="9.8" height="4.0" fill="#005a00"/><rect x="199.36" y="149.06" width="9.8" height="2.2" fill="#00ff00"/><rect x="199.36" y="152.17" width="9.8" height="4.0" fill="#005a00"/><rect x="199.36" y="153.07" width="9.8" height="2.2" fill="#00ff00"/><rect x="210.38" y="3.80" width="9.8" height="4.0" fill="#380000"/><rect x="210.38" y="4.70" width="9.8" height="2.2" fill="#8e0000"/><rect x="210.38" y="7.81" width="9.8" height="4.0" fill="#5a0000"/><rect x="210.38" y="8.71" width="9.8" height="2.2" fill="#ff0000"/><rect x="210.38" y="11.82" width="9.8" height="4.0" fill="#5a0000"/><rect x="210.38" y="12.72" width="9.8" height="2.2" fill="#ff0000"/><rect x="210.38" y="15.83" width="9.8" height="4.0" fill="#5a0000"/><rect x="210.38" y="16.73" width="9.8" height="2.2" fill="#ff0000"/><rect x="210.38" y="19.84" width="9.8" height="4.0" fill="#5a0000"/><rect x="210.38" y="20.74" width="9.8" height="2.2" fill="#ff0000"/><rect x="210.38" y="23.85" width="9.8" height="4.0" fill="#5a0000"/><rect x="210.38" y="24.75" width="9.8" height="2.2" fill="#ff0000"/><rect x="210.38" y="27.86" width="9.8" height="4.0" fill="#5a0000"/><rect x="210.38" y="28.76" width="9.8" height="2.2" fill="#ff0000"/><rect x="210.38" y="31.87" width="9.8" height="4.0" fill="#5a5a00"/><rect x="210.38" y="32.77" width="9.8" height="2.2" fill="#ffff00"/><rect x="210.38" y="35.88" width="9.8" height="4.0" fill="#5a5a00"/><rect x="210.38" y="36.78" width="9.8" height="2.2" fill="#ffff00"/><rect x="210.38" y="39.89" width="9.8" height="4.0" fill="#5a5a00"/><rect x="210.38" y="40.79" width="9.8" height="2.2" fill="#ffff00"/><rect x="210.38" y="43.90" width="9.8" height="4.0" fill="#5a5a00"/><rect x="210.38" y="44.80" width="9.8" height="2.2" fill="#ffff00"/><rect x="210.38" y="47.91" width="9.8" height="4.0" fill="#5a5a00"/><rect x="210.38" y="48.81" width="9.8" height="2.2" fill="#ffff00"/><rect x="210.38" y="51.92" width="9.8" height="4.0" fill="#5a5a00"/><rect x="210.38" y="52.82" width="9.8" height="2.2" fill="#ffff00"/><rect x="210.38" y="55.93" width="9.8" height="4.0" fill="#5a5a00"/><rect x="210.38" y="56.83" width="9.8" height="2.2" fill="#ffff00"/><rect x="210.38" y="59.94" width="9.8" height="4.0" fill="#5a5a00"/><rect x="210.38" y="60.84" width="9.8" height="2.2" fill="#ffff00"/><rect x="210.38" y="63.95" width="9.8" height="4.0" fill="#5a5a00"/><rect x="210.38" y="64.85" width="9.8" height="2.2" fill="#ffff00"/><rect x="210.38" y="67.96" width="9.8" height="4.0" fill="#5a5a00"/><rect x="210.38" y="68.86" width="9.8" height="2.2" fill="#ffff00"/><rect x="210.38" y="71.97" width="9.8" height="4.0" fill="#5a5a00"/><rect x="210.38" y="72.87" width="9.8" height="2.2" fill="#ffff00"/><rect x="210.38" y="75.98" width="9.8" height="4.0" fill="#5a5a00"/><rect x="210.38" y="76.88" width="9.8" height="2.2" fill="#ffff00"/><rect x="210.38" y="79.99" width="9.8" height="4.0" fill="#005a00"/><rect x="210.38" y="80.89" width="9.8" height="2.2" fill="#00ff00"/><rect x="210.38" y="84.00" width="9.8" height="4.0" fill="#005a00"/><rect x="210.38" y="84.90" width="9.8" height="2.2" fill="#00ff00"/><rect x="210.38" y="88.01" width="9.8" height="4.0" fill="#005a00"/><rect x="210.38" y="88.91" width="9.8" height="2.2" fill="#00ff00"/><rect x="210.38" y="92.02" width="9.8" height="4.0" fill="#005a00"/><rect x="210.38" y="92.92" width="9.8" height="2.2" fill="#00ff00"/><rect x="210.38" y="96.03" width="9.8" height="4.0" fill="#005a00"/><rect x="210.38" y="96.93" width="9.8" height="2.2" fill="#00ff00"/><rect x="210.38" y="100.04" width="9.8" height="4.0" fill="#005a00"/><rect x="210.38" y="100.94" width="9.8" height="2.2" fill="#00ff00"/><rect x="210.38" y="104.05" width="9.8" height="4.0" fill="#005a00"/><rect x="210.38" y="104.95" width="9.8" height="2.2" fill="#00ff00"/><rect x="210.38" y="108.06" width="9.8" height="4.0" fill="#005a00"/><rect x="210.38" y="108.96" width="9.8" height="2.2" fill="#00ff00"/><rect x="210.38" y="112.07" width="9.8" height="4.0" fill="#005a00"/><rect x="210.38" y="112.97" width="9.8" height="2.2" fill="#00ff00"/><rect x="210.38" y="116.08" width="9.8" height="4.0" fill="#005a00"/><rect x="210.38" y="116.98" width="9.8" height="2.2" fill="#00ff00"/><rect x="210.38" y="120.09" width="9.8" height="4.0" fill="#005a00"/><rect x="210.38" y="120.99" width="9.8" height="2.2" fill="#00ff00"/><rect x="210.38" y="124.10" width="9.8" height="4.0" fill="#005a00"/><rect x="210.38" y="125.00" width="9.8" height="2.2" fill="#00ff00"/><rect x="210.38" y="128.11" width="9.8" height="4.0" fill="#005a00"/><rect x="210.38" y="129.01" width="9.8" height="2.2" fill="#00ff00"/><rect x="210.38" y="132.12" width="9.8" height="4.0" fill="#005a00"/><rect x="210.38" y="133.02" width="9.8" height="2.2" fill="#00ff00"/><rect x="210.38" y="136.13" width="9.8" height="4.0" fill="#005a00"/><rect x="210.38" y="137.03" width="9.8" height="2.2" fill="#00ff00"/><rect x="210.38" y="140.14" width="9.8" height="4.0" fill="#005a00"/><rect x="210.38" y="141.04" width="9.8" height="2.2" fill="#00ff00"/><rect x="210.38" y="144.15" width="9.8" height="4.0" fill="#005a00"/><rect x="210.38" y="145.05" width="9.8" height="2.2" fill="#00ff00"/><rect x="210.38" y="148.16" width="9.8" height="4.0" fill="#005a00"/><rect x="210.38" y="149.06" width="9.8" height="2.2" fill="#00ff00"/><rect x="210.38" y="152.17" width="9.8" height="4.0" fill="#005a00"/><rect x="210.38" y="153.07" width="9.8" height="2.2" fill="#00ff00"/><rect x="221.40" y="3.80" width="9.8" height="4.0" fill="#380000"/><rect x="221.40" y="4.70" width="9.8" height="2.2" fill="#8e0000"/><rect x="221.40" y="7.81" width="9.8" height="4.0" fill="#5a0000"/><rect x="221.40" y="8.71" width="9.8" height="2.2" fill="#ff0000"/><rect x="221.40" y="11.82" width="9.8" height="4.0" fill="#5a0000"/><rect x="221.40" y="12.72" width="9.8" height="2.2" fill="#ff0000"/><rect x="221.40" y="15.83" width="9.8" height="4.0" fill="#5a0000"/><rect x="221.40" y="16.73" width="9.8" height="2.2" fill="#ff0000"/><rect x="221.40" y="19.84" width="9.8" height="4.0" fill="#5a0000"/><rect x="221.40" y="20.74" width="9.8" height="2.2" fill="#ff0000"/><rect x="221.40" y="23.85" width="9.8" height="4.0" fill="#5a0000"/><rect x="221.40" y="24.75" width="9.8" height="2.2" fill="#ff0000"/><rect x="221.40" y="27.86" width="9.8" height="4.0" fill="#5a0000"/><rect x="221.40" y="28.76" width="9.8" height="2.2" fill="#ff0000"/><rect x="221.40" y="31.87" width="9.8" height="4.0" fill="#5a5a00"/><rect x="221.40" y="32.77" width="9.8" height="2.2" fill="#ffff00"/><rect x="221.40" y="35.88" width="9.8" height="4.0" fill="#5a5a00"/><rect x="221.40" y="36.78" width="9.8" height="2.2" fill="#ffff00"/><rect x="221.40" y="39.89" width="9.8" height="4.0" fill="#5a5a00"/><rect x="221.40" y="40.79" width="9.8" height="2.2" fill="#ffff00"/><rect x="221.40" y="43.90" width="9.8" height="4.0" fill="#5a5a00"/><rect x="221.40" y="44.80" width="9.8" height="2.2" fill="#ffff00"/><rect x="221.40" y="47.91" width="9.8" height="4.0" fill="#5a5a00"/><rect x="221.40" y="48.81" width="9.8" height="2.2" fill="#ffff00"/><rect x="221.40" y="51.92" width="9.8" height="4.0" fill="#5a5a00"/><rect x="221.40" y="52.82" width="9.8" height="2.2" fill="#ffff00"/><rect x="221.40" y="55.93" width="9.8" height="4.0" fill="#5a5a00"/><rect x="221.40" y="56.83" width="9.8" height="2.2" fill="#ffff00"/><rect x="221.40" y="59.94" width="9.8" height="4.0" fill="#5a5a00"/><rect x="221.40" y="60.84" width="9.8" height="2.2" fill="#ffff00"/><rect x="221.40" y="63.95" width="9.8" height="4.0" fill="#5a5a00"/><rect x="221.40" y="64.85" width="9.8" height="2.2" fill="#ffff00"/><rect x="221.40" y="67.96" width="9.8" height="4.0" fill="#5a5a00"/><rect x="221.40" y="68.86" width="9.8" height="2.2" fill="#ffff00"/><rect x="221.40" y="71.97" width="9.8" height="4.0" fill="#5a5a00"/><rect x="221.40" y="72.87" width="9.8" height="2.2" fill="#ffff00"/><rect x="221.40" y="75.98" width="9.8" height="4.0" fill="#5a5a00"/><rect x="221.40" y="76.88" width="9.8" height="2.2" fill="#ffff00"/><rect x="221.40" y="79.99" width="9.8" height="4.0" fill="#005a00"/><rect x="221.40" y="80.89" width="9.8" height="2.2" fill="#00ff00"/><rect x="221.40" y="84.00" width="9.8" height="4.0" fill="#005a00"/><rect x="221.40" y="84.90" width="9.8" height="2.2" fill="#00ff00"/><rect x="221.40" y="88.01" width="9.8" height="4.0" fill="#005a00"/><rect x="221.40" y="88.91" width="9.8" height="2.2" fill="#00ff00"/><rect x="221.40" y="92.02" width="9.8" height="4.0" fill="#005a00"/><rect x="221.40" y="92.92" width="9.8" height="2.2" fill="#00ff00"/><rect x="221.40" y="96.03" width="9.8" height="4.0" fill="#005a00"/><rect x="221.40" y="96.93" width="9.8" height="2.2" fill="#00ff00"/><rect x="221.40" y="100.04" width="9.8" height="4.0" fill="#005a00"/><rect x="221.40" y="100.94" width="9.8" height="2.2" fill="#00ff00"/><rect x="221.40" y="104.05" width="9.8" height="4.0" fill="#005a00"/><rect x="221.40" y="104.95" width="9.8" height="2.2" fill="#00ff00"/><rect x="221.40" y="108.06" width="9.8" height="4.0" fill="#005a00"/><rect x="221.40" y="108.96" width="9.8" height="2.2" fill="#00ff00"/><rect x="221.40" y="112.07" width="9.8" height="4.0" fill="#005a00"/><rect x="221.40" y="112.97" width="9.8" height="2.2" fill="#00ff00"/><rect x="221.40" y="116.08" width="9.8" height="4.0" fill="#005a00"/><rect x="221.40" y="116.98" width="9.8" height="2.2" fill="#00ff00"/><rect x="221.40" y="120.09" width="9.8" height="4.0" fill="#005a00"/><rect x="221.40" y="120.99" width="9.8" height="2.2" fill="#00ff00"/><rect x="221.40" y="124.10" width="9.8" height="4.0" fill="#005a00"/><rect x="221.40" y="125.00" width="9.8" height="2.2" fill="#00ff00"/><rect x="221.40" y="128.11" width="9.8" height="4.0" fill="#005a00"/><rect x="221.40" y="129.01" width="9.8" height="2.2" fill="#00ff00"/><rect x="221.40" y="132.12" width="9.8" height="4.0" fill="#005a00"/><rect x="221.40" y="133.02" width="9.8" height="2.2" fill="#00ff00"/><rect x="221.40" y="136.13" width="9.8" height="4.0" fill="#005a00"/><rect x="221.40" y="137.03" width="9.8" height="2.2" fill="#00ff00"/><rect x="221.40" y="140.14" width="9.8" height="4.0" fill="#005a00"/><rect x="221.40" y="141.04" width="9.8" height="2.2" fill="#00ff00"/><rect x="221.40" y="144.15" width="9.8" height="4.0" fill="#005a00"/><rect x="221.40" y="145.05" width="9.8" height="2.2" fill="#00ff00"/><rect x="221.40" y="148.16" width="9.8" height="4.0" fill="#005a00"/><rect x="221.40" y="149.06" width="9.8" height="2.2" fill="#00ff00"/><rect x="221.40" y="152.17" width="9.8" height="4.0" fill="#005a00"/><rect x="221.40" y="153.07" width="9.8" height="2.2" fill="#00ff00"/><rect x="232.42" y="3.80" width="9.8" height="4.0" fill="#380000"/><rect x="232.42" y="4.70" width="9.8" height="2.2" fill="#8e0000"/><rect x="232.42" y="7.81" width="9.8" height="4.0" fill="#5a0000"/><rect x="232.42" y="8.71" width="9.8" height="2.2" fill="#ff0000"/><rect x="232.42" y="11.82" width="9.8" height="4.0" fill="#5a0000"/><rect x="232.42" y="12.72" width="9.8" height="2.2" fill="#ff0000"/><rect x="232.42" y="15.83" width="9.8" height="4.0" fill="#5a0000"/><rect x="232.42" y="16.73" width="9.8" height="2.2" fill="#ff0000"/><rect x="232.42" y="19.84" width="9.8" height="4.0" fill="#5a0000"/><rect x="232.42" y="20.74" width="9.8" height="2.2" fill="#ff0000"/><rect x="232.42" y="23.85" width="9.8" height="4.0" fill="#5a0000"/><rect x="232.42" y="24.75" width="9.8" height="2.2" fill="#ff0000"/><rect x="232.42" y="27.86" width="9.8" height="4.0" fill="#5a0000"/><rect x="232.42" y="28.76" width="9.8" height="2.2" fill="#ff0000"/><rect x="232.42" y="31.87" width="9.8" height="4.0" fill="#5a5a00"/><rect x="232.42" y="32.77" width="9.8" height="2.2" fill="#ffff00"/><rect x="232.42" y="35.88" width="9.8" height="4.0" fill="#5a5a00"/><rect x="232.42" y="36.78" width="9.8" height="2.2" fill="#ffff00"/><rect x="232.42" y="39.89" width="9.8" height="4.0" fill="#5a5a00"/><rect x="232.42" y="40.79" width="9.8" height="2.2" fill="#ffff00"/><rect x="232.42" y="43.90" width="9.8" height="4.0" fill="#5a5a00"/><rect x="232.42" y="44.80" width="9.8" height="2.2" fill="#ffff00"/><rect x="232.42" y="47.91" width="9.8" height="4.0" fill="#5a5a00"/><rect x="232.42" y="48.81" width="9.8" height="2.2" fill="#ffff00"/><rect x="232.42" y="51.92" width="9.8" height="4.0" fill="#5a5a00"/><rect x="232.42" y="52.82" width="9.8" height="2.2" fill="#ffff00"/><rect x="232.42" y="55.93" width="9.8" height="4.0" fill="#5a5a00"/><rect x="232.42" y="56.83" width="9.8" height="2.2" fill="#ffff00"/><rect x="232.42" y="59.94" width="9.8" height="4.0" fill="#5a5a00"/><rect x="232.42" y="60.84" width="9.8" height="2.2" fill="#ffff00"/><rect x="232.42" y="63.95" width="9.8" height="4.0" fill="#5a5a00"/><rect x="232.42" y="64.85" width="9.8" height="2.2" fill="#ffff00"/><rect x="232.42" y="67.96" width="9.8" height="4.0" fill="#5a5a00"/><rect x="232.42" y="68.86" width="9.8" height="2.2" fill="#ffff00"/><rect x="232.42" y="71.97" width="9.8" height="4.0" fill="#5a5a00"/><rect x="232.42" y="72.87" width="9.8" height="2.2" fill="#ffff00"/><rect x="232.42" y="75.98" width="9.8" height="4.0" fill="#5a5a00"/><rect x="232.42" y="76.88" width="9.8" height="2.2" fill="#ffff00"/><rect x="232.42" y="79.99" width="9.8" height="4.0" fill="#005a00"/><rect x="232.42" y="80.89" width="9.8" height="2.2" fill="#00ff00"/><rect x="232.42" y="84.00" width="9.8" height="4.0" fill="#005a00"/><rect x="232.42" y="84.90" width="9.8" height="2.2" fill="#00ff00"/><rect x="232.42" y="88.01" width="9.8" height="4.0" fill="#005a00"/><rect x="232.42" y="88.91" width="9.8" height="2.2" fill="#00ff00"/><rect x="232.42" y="92.02" width="9.8" height="4.0" fill="#005a00"/><rect x="232.42" y="92.92" width="9.8" height="2.2" fill="#00ff00"/><rect x="232.42" y="96.03" width="9.8" height="4.0" fill="#005a00"/><rect x="232.42" y="96.93" width="9.8" height="2.2" fill="#00ff00"/><rect x="232.42" y="100.04" width="9.8" height="4.0" fill="#005a00"/><rect x="232.42" y="100.94" width="9.8" height="2.2" fill="#00ff00"/><rect x="232.42" y="104.05" width="9.8" height="4.0" fill="#005a00"/><rect x="232.42" y="104.95" width="9.8" height="2.2" fill="#00ff00"/><rect x="232.42" y="108.06" width="9.8" height="4.0" fill="#005a00"/><rect x="232.42" y="108.96" width="9.8" height="2.2" fill="#00ff00"/><rect x="232.42" y="112.07" width="9.8" height="4.0" fill="#005a00"/><rect x="232.42" y="112.97" width="9.8" height="2.2" fill="#00ff00"/><rect x="232.42" y="116.08" width="9.8" height="4.0" fill="#005a00"/><rect x="232.42" y="116.98" width="9.8" height="2.2" fill="#00ff00"/><rect x="232.42" y="120.09" width="9.8" height="4.0" fill="#005a00"/><rect x="232.42" y="120.99" width="9.8" height="2.2" fill="#00ff00"/><rect x="232.42" y="124.10" width="9.8" height="4.0" fill="#005a00"/><rect x="232.42" y="125.00" width="9.8" height="2.2" fill="#00ff00"/><rect x="232.42" y="128.11" width="9.8" height="4.0" fill="#005a00"/><rect x="232.42" y="129.01" width="9.8" height="2.2" fill="#00ff00"/><rect x="232.42" y="132.12" width="9.8" height="4.0" fill="#005a00"/><rect x="232.42" y="133.02" width="9.8" height="2.2" fill="#00ff00"/><rect x="232.42" y="136.13" width="9.8" height="4.0" fill="#005a00"/><rect x="232.42" y="137.03" width="9.8" height="2.2" fill="#00ff00"/><rect x="232.42" y="140.14" width="9.8" height="4.0" fill="#005a00"/><rect x="232.42" y="141.04" width="9.8" height="2.2" fill="#00ff00"/><rect x="232.42" y="144.15" width="9.8" height="4.0" fill="#005a00"/><rect x="232.42" y="145.05" width="9.8" height="2.2" fill="#00ff00"/><rect x="232.42" y="148.16" width="9.8" height="4.0" fill="#005a00"/><rect x="232.42" y="149.06" width="9.8" height="2.2" fill="#00ff00"/><rect x="232.42" y="152.17" width="9.8" height="4.0" fill="#005a00"/><rect x="232.42" y="153.07" width="9.8" height="2.2" fill="#00ff00"/><rect x="243.44" y="3.80" width="9.8" height="4.0" fill="#380000"/><rect x="243.44" y="4.70" width="9.8" height="2.2" fill="#8e0000"/><rect x="243.44" y="7.81" width="9.8" height="4.0" fill="#380000"/><rect x="243.44" y="8.71" width="9.8" height="2.2" fill="#8e0000"/><rect x="243.44" y="11.82" width="9.8" height="4.0" fill="#5a0000"/><rect x="243.44" y="12.72" width="9.8" height="2.2" fill="#ff0000"/><rect x="243.44" y="15.83" width="9.8" height="4.0" fill="#5a0000"/><rect x="243.44" y="16.73" width="9.8" height="2.2" fill="#ff0000"/><rect x="243.44" y="19.84" width="9.8" height="4.0" fill="#5a0000"/><rect x="243.44" y="20.74" width="9.8" height="2.2" fill="#ff0000"/><rect x="243.44" y="23.85" width="9.8" height="4.0" fill="#5a0000"/><rect x="243.44" y="24.75" width="9.8" height="2.2" fill="#ff0000"/><rect x="243.44" y="27.86" width="9.8" height="4.0" fill="#5a0000"/><rect x="243.44" y="28.76" width="9.8" height="2.2" fill="#ff0000"/><rect x="243.44" y="31.87" width="9.8" height="4.0" fill="#5a5a00"/><rect x="243.44" y="32.77" width="9.8" height="2.2" fill="#ffff00"/><rect x="243.44" y="35.88" width="9.8" height="4.0" fill="#5a5a00"/><rect x="243.44" y="36.78" width="9.8" height="2.2" fill="#ffff00"/><rect x="243.44" y="39.89" width="9.8" height="4.0" fill="#5a5a00"/><rect x="243.44" y="40.79" width="9.8" height="2.2" fill="#ffff00"/><rect x="243.44" y="43.90" width="9.8" height="4.0" fill="#5a5a00"/><rect x="243.44" y="44.80" width="9.8" height="2.2" fill="#ffff00"/><rect x="243.44" y="47.91" width="9.8" height="4.0" fill="#5a5a00"/><rect x="243.44" y="48.81" width="9.8" height="2.2" fill="#ffff00"/><rect x="243.44" y="51.92" width="9.8" height="4.0" fill="#5a5a00"/><rect x="243.44" y="52.82" width="9.8" height="2.2" fill="#ffff00"/><rect x="243.44" y="55.93" width="9.8" height="4.0" fill="#5a5a00"/><rect x="243.44" y="56.83" width="9.8" height="2.2" fill="#ffff00"/><rect x="243.44" y="59.94" width="9.8" height="4.0" fill="#5a5a00"/><rect x="243.44" y="60.84" width="9.8" height="2.2" fill="#ffff00"/><rect x="243.44" y="63.95" width="9.8" height="4.0" fill="#5a5a00"/><rect x="243.44" y="64.85" width="9.8" height="2.2" fill="#ffff00"/><rect x="243.44" y="67.96" width="9.8" height="4.0" fill="#5a5a00"/><rect x="243.44" y="68.86" width="9.8" height="2.2" fill="#ffff00"/><rect x="243.44" y="71.97" width="9.8" height="4.0" fill="#5a5a00"/><rect x="243.44" y="72.87" width="9.8" height="2.2" fill="#ffff00"/><rect x="243.44" y="75.98" width="9.8" height="4.0" fill="#5a5a00"/><rect x="243.44" y="76.88" width="9.8" height="2.2" fill="#ffff00"/><rect x="243.44" y="79.99" width="9.8" height="4.0" fill="#005a00"/><rect x="243.44" y="80.89" width="9.8" height="2.2" fill="#00ff00"/><rect x="243.44" y="84.00" width="9.8" height="4.0" fill="#005a00"/><rect x="243.44" y="84.90" width="9.8" height="2.2" fill="#00ff00"/><rect x="243.44" y="88.01" width="9.8" height="4.0" fill="#005a00"/><rect x="243.44" y="88.91" width="9.8" height="2.2" fill="#00ff00"/><rect x="243.44" y="92.02" width="9.8" height="4.0" fill="#005a00"/><rect x="243.44" y="92.92" width="9.8" height="2.2" fill="#00ff00"/><rect x="243.44" y="96.03" width="9.8" height="4.0" fill="#005a00"/><rect x="243.44" y="96.93" width="9.8" height="2.2" fill="#00ff00"/><rect x="243.44" y="100.04" width="9.8" height="4.0" fill="#005a00"/><rect x="243.44" y="100.94" width="9.8" height="2.2" fill="#00ff00"/><rect x="243.44" y="104.05" width="9.8" height="4.0" fill="#005a00"/><rect x="243.44" y="104.95" width="9.8" height="2.2" fill="#00ff00"/><rect x="243.44" y="108.06" width="9.8" height="4.0" fill="#005a00"/><rect x="243.44" y="108.96" width="9.8" height="2.2" fill="#00ff00"/><rect x="243.44" y="112.07" width="9.8" height="4.0" fill="#005a00"/><rect x="243.44" y="112.97" width="9.8" height="2.2" fill="#00ff00"/><rect x="243.44" y="116.08" width="9.8" height="4.0" fill="#005a00"/><rect x="243.44" y="116.98" width="9.8" height="2.2" fill="#00ff00"/><rect x="243.44" y="120.09" width="9.8" height="4.0" fill="#005a00"/><rect x="243.44" y="120.99" width="9.8" height="2.2" fill="#00ff00"/><rect x="243.44" y="124.10" width="9.8" height="4.0" fill="#005a00"/><rect x="243.44" y="125.00" width="9.8" height="2.2" fill="#00ff00"/><rect x="243.44" y="128.11" width="9.8" height="4.0" fill="#005a00"/><rect x="243.44" y="129.01" width="9.8" height="2.2" fill="#00ff00"/><rect x="243.44" y="132.12" width="9.8" height="4.0" fill="#005a00"/><rect x="243.44" y="133.02" width="9.8" height="2.2" fill="#00ff00"/><rect x="243.44" y="136.13" width="9.8" height="4.0" fill="#005a00"/><rect x="243.44" y="137.03" width="9.8" height="2.2" fill="#00ff00"/><rect x="243.44" y="140.14" width="9.8" height="4.0" fill="#005a00"/><rect x="243.44" y="141.04" width="9.8" height="2.2" fill="#00ff00"/><rect x="243.44" y="144.15" width="9.8" height="4.0" fill="#005a00"/><rect x="243.44" y="145.05" width="9.8" height="2.2" fill="#00ff00"/><rect x="243.44" y="148.16" width="9.8" height="4.0" fill="#005a00"/><rect x="243.44" y="149.06" width="9.8" height="2.2" fill="#00ff00"/><rect x="243.44" y="152.17" width="9.8" height="4.0" fill="#005a00"/><rect x="243.44" y="153.07" width="9.8" height="2.2" fill="#00ff00"/><rect x="254.46" y="3.80" width="9.8" height="4.0" fill="#380000"/><rect x="254.46" y="4.70" width="9.8" height="2.2" fill="#8e0000"/><rect x="254.46" y="7.81" width="9.8" height="4.0" fill="#5a0000"/><rect x="254.46" y="8.71" width="9.8" height="2.2" fill="#ff0000"/><rect x="254.46" y="11.82" width="9.8" height="4.0" fill="#5a0000"/><rect x="254.46" y="12.72" width="9.8" height="2.2" fill="#ff0000"/><rect x="254.46" y="15.83" width="9.8" height="4.0" fill="#5a0000"/><rect x="254.46" y="16.73" width="9.8" height="2.2" fill="#ff0000"/><rect x="254.46" y="19.84" width="9.8" height="4.0" fill="#5a0000"/><rect x="254.46" y="20.74" width="9.8" height="2.2" fill="#ff0000"/><rect x="254.46" y="23.85" width="9.8" height="4.0" fill="#5a0000"/><rect x="254.46" y="24.75" width="9.8" height="2.2" fill="#ff0000"/><rect x="254.46" y="27.86" width="9.8" height="4.0" fill="#5a0000"/><rect x="254.46" y="28.76" width="9.8" height="2.2" fill="#ff0000"/><rect x="254.46" y="31.87" width="9.8" height="4.0" fill="#5a5a00"/><rect x="254.46" y="32.77" width="9.8" height="2.2" fill="#ffff00"/><rect x="254.46" y="35.88" width="9.8" height="4.0" fill="#5a5a00"/><rect x="254.46" y="36.78" width="9.8" height="2.2" fill="#ffff00"/><rect x="254.46" y="39.89" width="9.8" height="4.0" fill="#5a5a00"/><rect x="254.46" y="40.79" width="9.8" height="2.2" fill="#ffff00"/><rect x="254.46" y="43.90" width="9.8" height="4.0" fill="#5a5a00"/><rect x="254.46" y="44.80" width="9.8" height="2.2" fill="#ffff00"/><rect x="254.46" y="47.91" width="9.8" height="4.0" fill="#5a5a00"/><rect x="254.46" y="48.81" width="9.8" height="2.2" fill="#ffff00"/><rect x="254.46" y="51.92" width="9.8" height="4.0" fill="#5a5a00"/><rect x="254.46" y="52.82" width="9.8" height="2.2" fill="#ffff00"/><rect x="254.46" y="55.93" width="9.8" height="4.0" fill="#5a5a00"/><rect x="254.46" y="56.83" width="9.8" height="2.2" fill="#ffff00"/><rect x="254.46" y="59.94" width="9.8" height="4.0" fill="#5a5a00"/><rect x="254.46" y="60.84" width="9.8" height="2.2" fill="#ffff00"/><rect x="254.46" y="63.95" width="9.8" height="4.0" fill="#5a5a00"/><rect x="254.46" y="64.85" width="9.8" height="2.2" fill="#ffff00"/><rect x="254.46" y="67.96" width="9.8" height="4.0" fill="#5a5a00"/><rect x="254.46" y="68.86" width="9.8" height="2.2" fill="#ffff00"/><rect x="254.46" y="71.97" width="9.8" height="4.0" fill="#5a5a00"/><rect x="254.46" y="72.87" width="9.8" height="2.2" fill="#ffff00"/><rect x="254.46" y="75.98" width="9.8" height="4.0" fill="#5a5a00"/><rect x="254.46" y="76.88" width="9.8" height="2.2" fill="#ffff00"/><rect x="254.46" y="79.99" width="9.8" height="4.0" fill="#005a00"/><rect x="254.46" y="80.89" width="9.8" height="2.2" fill="#00ff00"/><rect x="254.46" y="84.00" width="9.8" height="4.0" fill="#005a00"/><rect x="254.46" y="84.90" width="9.8" height="2.2" fill="#00ff00"/><rect x="254.46" y="88.01" width="9.8" height="4.0" fill="#005a00"/><rect x="254.46" y="88.91" width="9.8" height="2.2" fill="#00ff00"/><rect x="254.46" y="92.02" width="9.8" height="4.0" fill="#005a00"/><rect x="254.46" y="92.92" width="9.8" height="2.2" fill="#00ff00"/><rect x="254.46" y="96.03" width="9.8" height="4.0" fill="#005a00"/><rect x="254.46" y="96.93" width="9.8" height="2.2" fill="#00ff00"/><rect x="254.46" y="100.04" width="9.8" height="4.0" fill="#005a00"/><rect x="254.46" y="100.94" width="9.8" height="2.2" fill="#00ff00"/><rect x="254.46" y="104.05" width="9.8" height="4.0" fill="#005a00"/><rect x="254.46" y="104.95" width="9.8" height="2.2" fill="#00ff00"/><rect x="254.46" y="108.06" width="9.8" height="4.0" fill="#005a00"/><rect x="254.46" y="108.96" width="9.8" height="2.2" fill="#00ff00"/><rect x="254.46" y="112.07" width="9.8" height="4.0" fill="#005a00"/><rect x="254.46" y="112.97" width="9.8" height="2.2" fill="#00ff00"/><rect x="254.46" y="116.08" width="9.8" height="4.0" fill="#005a00"/><rect x="254.46" y="116.98" width="9.8" height="2.2" fill="#00ff00"/><rect x="254.46" y="120.09" width="9.8" height="4.0" fill="#005a00"/><rect x="254.46" y="120.99" width="9.8" height="2.2" fill="#00ff00"/><rect x="254.46" y="124.10" width="9.8" height="4.0" fill="#005a00"/><rect x="254.46" y="125.00" width="9.8" height="2.2" fill="#00ff00"/><rect x="254.46" y="128.11" width="9.8" height="4.0" fill="#005a00"/><rect x="254.46" y="129.01" width="9.8" height="2.2" fill="#00ff00"/><rect x="254.46" y="132.12" width="9.8" height="4.0" fill="#005a00"/><rect x="254.46" y="133.02" width="9.8" height="2.2" fill="#00ff00"/><rect x="254.46" y="136.13" width="9.8" height="4.0" fill="#005a00"/><rect x="254.46" y="137.03" width="9.8" height="2.2" fill="#00ff00"/><rect x="254.46" y="140.14" width="9.8" height="4.0" fill="#005a00"/><rect x="254.46" y="141.04" width="9.8" height="2.2" fill="#00ff00"/><rect x="254.46" y="144.15" width="9.8" height="4.0" fill="#005a00"/><rect x="254.46" y="145.05" width="9.8" height="2.2" fill="#00ff00"/><rect x="254.46" y="148.16" width="9.8" height="4.0" fill="#005a00"/><rect x="254.46" y="149.06" width="9.8" height="2.2" fill="#00ff00"/><rect x="254.46" y="152.17" width="9.8" height="4.0" fill="#005a00"/><rect x="254.46" y="153.07" width="9.8" height="2.2" fill="#00ff00"/></svg>
<div style="position:absolute;left:614px;top:565px;width:180px;height:45px;background:#fdfdfd;border:1px solid #7fb2e6;border-radius:3px"></div>
<div class="t" style="left:680px;top:578.6px;color:#111;">停止运行</div>
<div class="t" style="left:447px;top:639px;color:#111;">在第三方软件中使用您的虚拟麦克风</div>
<div class="t" style="left:831px;top:638.7px;color:#0000ee;"><u>在线教程</u></div>
<div style="position:absolute;left:413px;top:692px;width:582px;height:1px;background:#e3e3e3"></div>
<svg width="12" height="12" style="position:absolute;left:983px;top:690px"><path d="M10.5 3.5 L3.5 10.5 M10.5 7 L7 10.5" stroke="#c8c8c8" stroke-width="1" stroke-dasharray="1 1"/></svg>
</body></html>
